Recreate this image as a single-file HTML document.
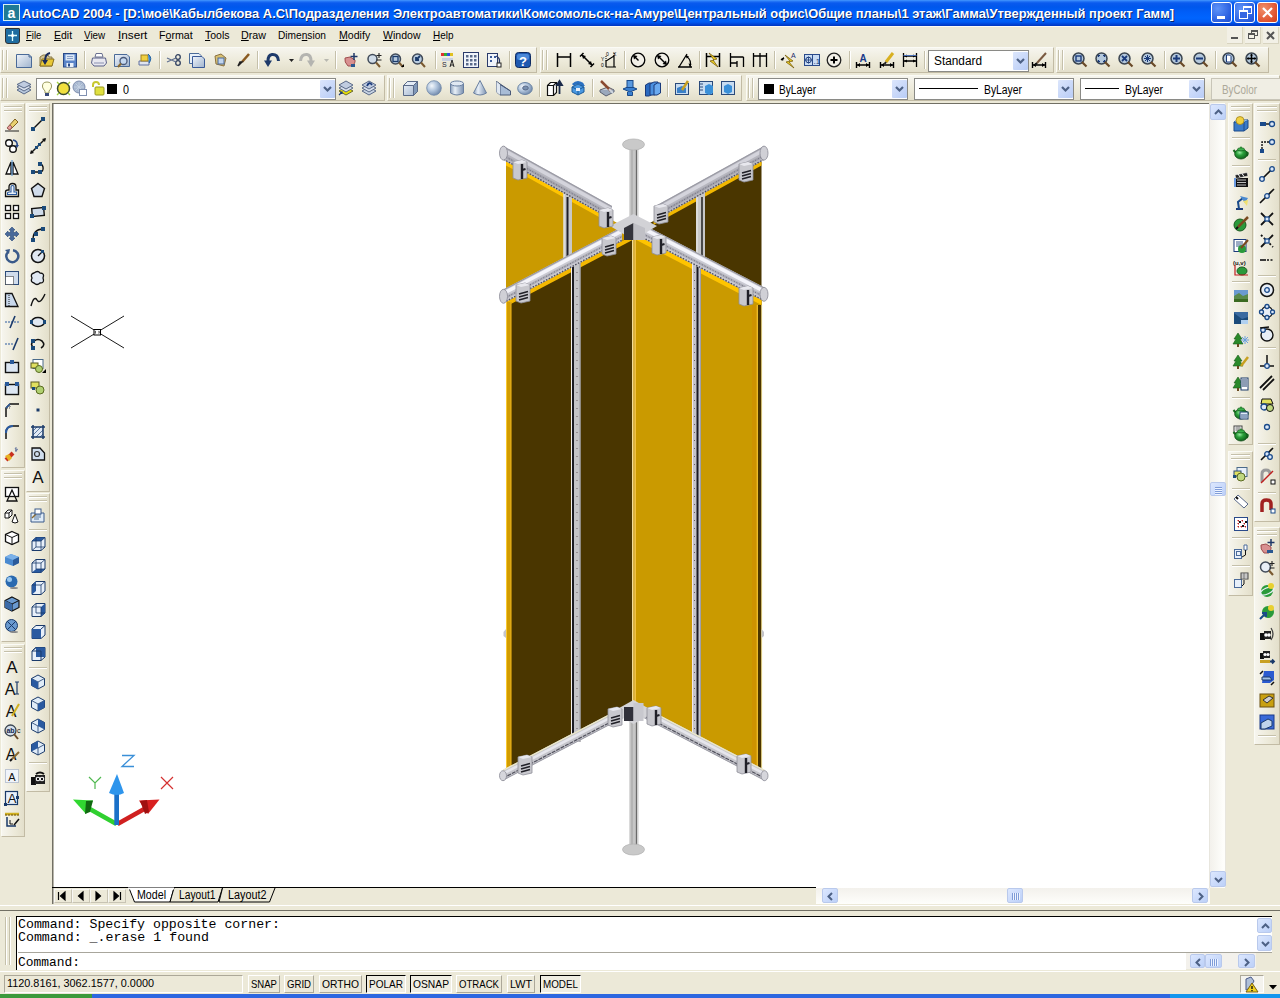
<!DOCTYPE html>
<html><head><meta charset="utf-8">
<style>
*{margin:0;padding:0;box-sizing:border-box}
html,body{width:1280px;height:998px;overflow:hidden;background:#ECE9D8;font-family:"Liberation Sans",sans-serif;color:#000}
.a{position:absolute}
.t{white-space:nowrap}
svg{overflow:visible}
</style></head><body>
<div class="a " style="left:0px;top:0px;width:1280px;height:26px;background:linear-gradient(#4A9CFF 0px,#2A7CF8 1px,#0A5AEE 3px,#0057EC 7px,#005EF8 12px,#0064FE 18px,#005CF4 22px,#0046DA 24px,#0036C0 26px)"></div>
<div class="a " style="left:3px;top:4px;width:17px;height:17px;background:#1F7A95;border:1px solid #D8F0F0;"><svg width="15" height="15" style="position:absolute;left:0;top:0"><text x="7.5" y="12.5" font-size="14" font-family="Liberation Sans" font-weight="bold" fill="#fff" text-anchor="middle">a</text></svg></div>
<div id="t1" class="a t" style="left:22px;top:6px;font-size:13px;line-height:15px;font-family:'Liberation Sans',sans-serif;font-weight:bold;color:#fff;transform:scaleX(0.9933);transform-origin:0 0;text-shadow:1px 1px 0 #0A246A;">AutoCAD 2004 - [D:\моё\Кабылбекова А.С\Подразделения Электроавтоматики\Комсомольск-на-Амуре\Центральный офис\Общие планы\1 этаж\Гамма\Утвержденный проект Гамм]</div>
<div class="a " style="left:1211px;top:2px;width:21px;height:21px;border:1px solid #fff;border-radius:3px;background:radial-gradient(circle at 30% 30%,#5E93F8,#2A5FE0 70%,#1F4FCC);"><div class="a" style="left:5px;top:13px;width:8px;height:3px;background:#fff"></div></div>
<div class="a " style="left:1234px;top:2px;width:21px;height:21px;border:1px solid #fff;border-radius:3px;background:radial-gradient(circle at 30% 30%,#5E93F8,#2A5FE0 70%,#1F4FCC);"><div class="a" style="left:8px;top:3px;width:9px;height:8px;border:1px solid #fff;border-top-width:2px"></div><div class="a" style="left:4px;top:7px;width:9px;height:9px;border:1px solid #fff;border-top-width:2px;background:#3466E2"></div></div>
<div class="a " style="left:1257px;top:2px;width:21px;height:21px;border:1px solid #fff;border-radius:3px;background:radial-gradient(circle at 30% 30%,#F0906A,#E0532F 70%,#C8401E);"><svg class="a" style="left:0;top:0" width="19" height="19"><path d="M5 5L14 14M14 5L5 14" stroke="#fff" stroke-width="2.2"/></svg></div>
<div class="a " style="left:0px;top:26px;width:1280px;height:20px;background:#ECE9D8;border-top:1px solid #FCFAF4"></div>
<div id="t2" class="a t" style="left:25.6px;top:29px;font-size:11px;line-height:13px;font-family:'Liberation Sans',sans-serif;color:#000;transform:scaleX(0.8676);transform-origin:0 0;"><u>F</u>ile</div>
<div id="t3" class="a t" style="left:53.8px;top:29px;font-size:11px;line-height:13px;font-family:'Liberation Sans',sans-serif;color:#000;transform:scaleX(0.9542);transform-origin:0 0;"><u>E</u>dit</div>
<div id="t4" class="a t" style="left:83.8px;top:29px;font-size:11px;line-height:13px;font-family:'Liberation Sans',sans-serif;color:#000;transform:scaleX(0.8962);transform-origin:0 0;"><u>V</u>iew</div>
<div id="t5" class="a t" style="left:117.5px;top:29px;font-size:11px;line-height:13px;font-family:'Liberation Sans',sans-serif;color:#000;transform:scaleX(1.0679);transform-origin:0 0;"><u>I</u>nsert</div>
<div id="t6" class="a t" style="left:158.8px;top:29px;font-size:11px;line-height:13px;font-family:'Liberation Sans',sans-serif;color:#000;transform:scaleX(0.9667);transform-origin:0 0;">F<u>o</u>rmat</div>
<div id="t7" class="a t" style="left:205px;top:29px;font-size:11px;line-height:13px;font-family:'Liberation Sans',sans-serif;color:#000;transform:scaleX(0.9538);transform-origin:0 0;"><u>T</u>ools</div>
<div id="t8" class="a t" style="left:241px;top:29px;font-size:11px;line-height:13px;font-family:'Liberation Sans',sans-serif;color:#000;transform:scaleX(0.9732);transform-origin:0 0;"><u>D</u>raw</div>
<div id="t9" class="a t" style="left:278px;top:29px;font-size:11px;line-height:13px;font-family:'Liberation Sans',sans-serif;color:#000;transform:scaleX(0.9234);transform-origin:0 0;">Dime<u>n</u>sion</div>
<div id="t10" class="a t" style="left:338.8px;top:29px;font-size:11px;line-height:13px;font-family:'Liberation Sans',sans-serif;color:#000;transform:scaleX(0.9623);transform-origin:0 0;"><u>M</u>odify</div>
<div id="t11" class="a t" style="left:382.5px;top:29px;font-size:11px;line-height:13px;font-family:'Liberation Sans',sans-serif;color:#000;transform:scaleX(0.9581);transform-origin:0 0;"><u>W</u>indow</div>
<div id="t12" class="a t" style="left:432.5px;top:29px;font-size:11px;line-height:13px;font-family:'Liberation Sans',sans-serif;color:#000;transform:scaleX(0.9055);transform-origin:0 0;"><u>H</u>elp</div>
<div class="a " style="left:5px;top:28px;width:15px;height:16px;background:#1E6CA0;border:1px solid #333;border-radius:1px 1px 3px 3px"><svg class="a" style="left:0;top:0" width="13" height="14"><path d="M6.5 2V12M2 6.5H11" stroke="#dff" stroke-width="1.3"/><circle cx="6.5" cy="6.5" r="1.5" fill="#fff"/></svg></div>
<div class="a " style="left:1227px;top:27px;width:16px;height:17px;background:#F2F0E6;border-right:1px solid #D8D4C0;border-bottom:1px solid #D8D4C0"><div class="a" style="left:4px;top:10px;width:7px;height:2px;background:#555"></div></div>
<div class="a " style="left:1245px;top:27px;width:16px;height:17px;background:#F2F0E6;border-right:1px solid #D8D4C0;border-bottom:1px solid #D8D4C0"><div class="a" style="left:6px;top:3px;width:7px;height:6px;border:1px solid #555;border-top-width:2px"></div><div class="a" style="left:3px;top:6px;width:7px;height:6px;border:1px solid #555;border-top-width:2px;background:#F2F0E6"></div></div>
<div class="a " style="left:1263px;top:27px;width:16px;height:17px;background:#F2F0E6;border-right:1px solid #D8D4C0;border-bottom:1px solid #D8D4C0"><svg class="a" style="left:0;top:0" width="16" height="17"><path d="M4 5L11 12M11 5L4 12" stroke="#555" stroke-width="2"/></svg></div>
<div class="a " style="left:0px;top:46px;width:1280px;height:57px;background:#ECE9D8"></div>
<div class="a " style="left:0px;top:47px;width:537px;height:26px;background:linear-gradient(#F6F5EE,#ECE9D8 60%,#E3DFCB);border-right:1px solid #C2BBA4;border-bottom:1px solid #C2BBA4;border-top:1px solid #FBFBF6;border-left:1px solid #FBFBF6"></div>
<div class="a " style="left:2px;top:50px;width:2px;height:20px;border-left:1px solid #C5C0AA;border-right:1px solid #fff"></div>
<div class="a " style="left:6px;top:50px;width:2px;height:20px;border-left:1px solid #C5C0AA;border-right:1px solid #fff"></div>
<div class="a " style="left:540px;top:47px;width:514px;height:26px;background:linear-gradient(#F6F5EE,#ECE9D8 60%,#E3DFCB);border-right:1px solid #C2BBA4;border-bottom:1px solid #C2BBA4;border-top:1px solid #FBFBF6;border-left:1px solid #FBFBF6"></div>
<div class="a " style="left:542px;top:50px;width:2px;height:20px;border-left:1px solid #C5C0AA;border-right:1px solid #fff"></div>
<div class="a " style="left:546px;top:50px;width:2px;height:20px;border-left:1px solid #C5C0AA;border-right:1px solid #fff"></div>
<div class="a " style="left:1056px;top:47px;width:213px;height:26px;background:linear-gradient(#F6F5EE,#ECE9D8 60%,#E3DFCB);border-right:1px solid #C2BBA4;border-bottom:1px solid #C2BBA4;border-top:1px solid #FBFBF6;border-left:1px solid #FBFBF6"></div>
<div class="a " style="left:1058px;top:50px;width:2px;height:20px;border-left:1px solid #C5C0AA;border-right:1px solid #fff"></div>
<div class="a " style="left:1062px;top:50px;width:2px;height:20px;border-left:1px solid #C5C0AA;border-right:1px solid #fff"></div>
<div class="a " style="left:0px;top:75px;width:385px;height:26px;background:linear-gradient(#F6F5EE,#ECE9D8 60%,#E3DFCB);border-right:1px solid #C2BBA4;border-bottom:1px solid #C2BBA4;border-top:1px solid #FBFBF6;border-left:1px solid #FBFBF6"></div>
<div class="a " style="left:2px;top:78px;width:2px;height:20px;border-left:1px solid #C5C0AA;border-right:1px solid #fff"></div>
<div class="a " style="left:6px;top:78px;width:2px;height:20px;border-left:1px solid #C5C0AA;border-right:1px solid #fff"></div>
<div class="a " style="left:387px;top:75px;width:355px;height:26px;background:linear-gradient(#F6F5EE,#ECE9D8 60%,#E3DFCB);border-right:1px solid #C2BBA4;border-bottom:1px solid #C2BBA4;border-top:1px solid #FBFBF6;border-left:1px solid #FBFBF6"></div>
<div class="a " style="left:389px;top:78px;width:2px;height:20px;border-left:1px solid #C5C0AA;border-right:1px solid #fff"></div>
<div class="a " style="left:393px;top:78px;width:2px;height:20px;border-left:1px solid #C5C0AA;border-right:1px solid #fff"></div>
<div class="a " style="left:746px;top:75px;width:534px;height:26px;background:linear-gradient(#F6F5EE,#ECE9D8 60%,#E3DFCB);border-right:1px solid #C2BBA4;border-bottom:1px solid #C2BBA4;border-top:1px solid #FBFBF6;border-left:1px solid #FBFBF6"></div>
<div class="a " style="left:748px;top:78px;width:2px;height:20px;border-left:1px solid #C5C0AA;border-right:1px solid #fff"></div>
<div class="a " style="left:752px;top:78px;width:2px;height:20px;border-left:1px solid #C5C0AA;border-right:1px solid #fff"></div>
<div class="a " style="left:84px;top:51px;width:2px;height:18px;border-left:1px solid #C5C0AA;border-right:1px solid #fff"></div>
<div class="a " style="left:159px;top:51px;width:2px;height:18px;border-left:1px solid #C5C0AA;border-right:1px solid #fff"></div>
<div class="a " style="left:257px;top:51px;width:2px;height:18px;border-left:1px solid #C5C0AA;border-right:1px solid #fff"></div>
<div class="a " style="left:335px;top:51px;width:2px;height:18px;border-left:1px solid #C5C0AA;border-right:1px solid #fff"></div>
<div class="a " style="left:435px;top:51px;width:2px;height:18px;border-left:1px solid #C5C0AA;border-right:1px solid #fff"></div>
<div class="a " style="left:509px;top:51px;width:2px;height:18px;border-left:1px solid #C5C0AA;border-right:1px solid #fff"></div>
<div class="a " style="left:624px;top:51px;width:2px;height:18px;border-left:1px solid #C5C0AA;border-right:1px solid #fff"></div>
<div class="a " style="left:699px;top:51px;width:2px;height:18px;border-left:1px solid #C5C0AA;border-right:1px solid #fff"></div>
<div class="a " style="left:774px;top:51px;width:2px;height:18px;border-left:1px solid #C5C0AA;border-right:1px solid #fff"></div>
<div class="a " style="left:849px;top:51px;width:2px;height:18px;border-left:1px solid #C5C0AA;border-right:1px solid #fff"></div>
<div class="a " style="left:924px;top:51px;width:2px;height:18px;border-left:1px solid #C5C0AA;border-right:1px solid #fff"></div>
<div class="a " style="left:1164px;top:51px;width:2px;height:18px;border-left:1px solid #C5C0AA;border-right:1px solid #fff"></div>
<div class="a " style="left:1215px;top:51px;width:2px;height:18px;border-left:1px solid #C5C0AA;border-right:1px solid #fff"></div>
<div class="a " style="left:539px;top:79px;width:2px;height:18px;border-left:1px solid #C5C0AA;border-right:1px solid #fff"></div>
<div class="a " style="left:592px;top:79px;width:2px;height:18px;border-left:1px solid #C5C0AA;border-right:1px solid #fff"></div>
<div class="a " style="left:667px;top:79px;width:2px;height:18px;border-left:1px solid #C5C0AA;border-right:1px solid #fff"></div>
<div class="a " style="left:0px;top:103px;width:52px;height:800px;background:#ECE9D8"></div>
<div class="a " style="left:1px;top:103px;width:24px;height:365px;background:linear-gradient(90deg,#F6F5EE,#ECE9D8 60%,#E3DFCB);border-right:1px solid #C2BBA4;border-bottom:1px solid #C2BBA4;border-top:1px solid #FBFBF6;border-left:1px solid #FBFBF6"></div>
<div class="a " style="left:4px;top:106px;width:18px;height:2px;border-top:1px solid #C5C0AA;border-bottom:1px solid #fff"></div>
<div class="a " style="left:4px;top:110px;width:18px;height:2px;border-top:1px solid #C5C0AA;border-bottom:1px solid #fff"></div>
<div class="a " style="left:26px;top:103px;width:24px;height:389px;background:linear-gradient(90deg,#F6F5EE,#ECE9D8 60%,#E3DFCB);border-right:1px solid #C2BBA4;border-bottom:1px solid #C2BBA4;border-top:1px solid #FBFBF6;border-left:1px solid #FBFBF6"></div>
<div class="a " style="left:29px;top:106px;width:18px;height:2px;border-top:1px solid #C5C0AA;border-bottom:1px solid #fff"></div>
<div class="a " style="left:29px;top:110px;width:18px;height:2px;border-top:1px solid #C5C0AA;border-bottom:1px solid #fff"></div>
<div class="a " style="left:1px;top:470px;width:24px;height:172px;background:linear-gradient(90deg,#F6F5EE,#ECE9D8 60%,#E3DFCB);border-right:1px solid #C2BBA4;border-bottom:1px solid #C2BBA4;border-top:1px solid #FBFBF6;border-left:1px solid #FBFBF6"></div>
<div class="a " style="left:4px;top:473px;width:18px;height:2px;border-top:1px solid #C5C0AA;border-bottom:1px solid #fff"></div>
<div class="a " style="left:4px;top:477px;width:18px;height:2px;border-top:1px solid #C5C0AA;border-bottom:1px solid #fff"></div>
<div class="a " style="left:26px;top:493px;width:24px;height:299px;background:linear-gradient(90deg,#F6F5EE,#ECE9D8 60%,#E3DFCB);border-right:1px solid #C2BBA4;border-bottom:1px solid #C2BBA4;border-top:1px solid #FBFBF6;border-left:1px solid #FBFBF6"></div>
<div class="a " style="left:29px;top:496px;width:18px;height:2px;border-top:1px solid #C5C0AA;border-bottom:1px solid #fff"></div>
<div class="a " style="left:29px;top:500px;width:18px;height:2px;border-top:1px solid #C5C0AA;border-bottom:1px solid #fff"></div>
<div class="a " style="left:1px;top:644px;width:24px;height:193px;background:linear-gradient(90deg,#F6F5EE,#ECE9D8 60%,#E3DFCB);border-right:1px solid #C2BBA4;border-bottom:1px solid #C2BBA4;border-top:1px solid #FBFBF6;border-left:1px solid #FBFBF6"></div>
<div class="a " style="left:4px;top:647px;width:18px;height:2px;border-top:1px solid #C5C0AA;border-bottom:1px solid #fff"></div>
<div class="a " style="left:4px;top:651px;width:18px;height:2px;border-top:1px solid #C5C0AA;border-bottom:1px solid #fff"></div>
<div class="a " style="left:52px;top:103px;width:1158px;height:785px;background:#fff;border-left:1px solid #716F64;border-top:1px solid #716F64;box-shadow:inset 1px 0 0 #B8B6AC"></div>
<div class="a " style="left:52px;top:887px;width:764px;height:1px;background:#000"></div>
<div class="a " style="left:1209px;top:103px;width:19px;height:785px;background:linear-gradient(90deg,#E8E6DE 0,#E8E6DE 1px,#F3F1EC 1px,#F6F5F0 5px,#FEFEFB 14px,#FEFEFB 16px,#E8E6DE 16px,#E8E6DE 17px,#FAFAF2 17px)"></div>
<div class="a " style="left:1210px;top:104px;width:16px;height:16px;background:linear-gradient(135deg,#DCE7FE,#BCD0F8);border:1px solid #B9C9EC;border-radius:2px"><svg class="a" style="left:0;top:0" width="16" height="16"><path d="M4 9L7.5 5.5L11 9" stroke="#4D6185" stroke-width="2" fill="none"/></svg></div>
<div class="a " style="left:1210px;top:871px;width:16px;height:16px;background:linear-gradient(135deg,#DCE7FE,#BCD0F8);border:1px solid #B9C9EC;border-radius:2px"><svg class="a" style="left:0;top:0" width="16" height="16"><path d="M4 6L7.5 9.5L11 6" stroke="#4D6185" stroke-width="2" fill="none"/></svg></div>
<div class="a " style="left:1210px;top:482px;width:16px;height:14px;background:linear-gradient(135deg,#DCE7FE,#BCD0F8);border:1px solid #B9C9EC;border-radius:2px"><svg class="a" style="left:0;top:0" width="16" height="14"><path d="M4 4.5H11M4 6.5H11M4 8.5H11M4 10.5H11" stroke="#7F9CD8" stroke-width="1"/><path d="M4 5.5H11M4 7.5H11M4 9.5H11M4 11.5H11" stroke="#EEF4FF" stroke-width="1"/></svg></div>
<div class="a " style="left:1226px;top:103px;width:54px;height:800px;background:#ECE9D8"></div>
<div class="a " style="left:1228px;top:103px;width:25px;height:342px;background:linear-gradient(90deg,#F6F5EE,#ECE9D8 60%,#E3DFCB);border-right:1px solid #C2BBA4;border-bottom:1px solid #C2BBA4;border-top:1px solid #FBFBF6;border-left:1px solid #FBFBF6"></div>
<div class="a " style="left:1231px;top:106px;width:19px;height:2px;border-top:1px solid #C5C0AA;border-bottom:1px solid #fff"></div>
<div class="a " style="left:1231px;top:110px;width:19px;height:2px;border-top:1px solid #C5C0AA;border-bottom:1px solid #fff"></div>
<div class="a " style="left:1228px;top:451px;width:25px;height:145px;background:linear-gradient(90deg,#F6F5EE,#ECE9D8 60%,#E3DFCB);border-right:1px solid #C2BBA4;border-bottom:1px solid #C2BBA4;border-top:1px solid #FBFBF6;border-left:1px solid #FBFBF6"></div>
<div class="a " style="left:1231px;top:454px;width:19px;height:2px;border-top:1px solid #C5C0AA;border-bottom:1px solid #fff"></div>
<div class="a " style="left:1231px;top:458px;width:19px;height:2px;border-top:1px solid #C5C0AA;border-bottom:1px solid #fff"></div>
<div class="a " style="left:1254px;top:103px;width:26px;height:419px;background:linear-gradient(90deg,#F6F5EE,#ECE9D8 60%,#E3DFCB);border-right:1px solid #C2BBA4;border-bottom:1px solid #C2BBA4;border-top:1px solid #FBFBF6;border-left:1px solid #FBFBF6"></div>
<div class="a " style="left:1257px;top:106px;width:20px;height:2px;border-top:1px solid #C5C0AA;border-bottom:1px solid #fff"></div>
<div class="a " style="left:1257px;top:110px;width:20px;height:2px;border-top:1px solid #C5C0AA;border-bottom:1px solid #fff"></div>
<div class="a " style="left:1254px;top:527px;width:26px;height:218px;background:linear-gradient(90deg,#F6F5EE,#ECE9D8 60%,#E3DFCB);border-right:1px solid #C2BBA4;border-bottom:1px solid #C2BBA4;border-top:1px solid #FBFBF6;border-left:1px solid #FBFBF6"></div>
<div class="a " style="left:1257px;top:530px;width:20px;height:2px;border-top:1px solid #C5C0AA;border-bottom:1px solid #fff"></div>
<div class="a " style="left:1257px;top:534px;width:20px;height:2px;border-top:1px solid #C5C0AA;border-bottom:1px solid #fff"></div>
<div class="a " style="left:52px;top:888px;width:764px;height:16px;background:#ECE9D8;border-left:1px solid #716F64;box-shadow:inset 1px 0 0 #B8B6AC"></div>
<div class="a " style="left:816px;top:888px;width:394px;height:16px;background:linear-gradient(#F3F1EC,#FEFEFB)"></div>
<div class="a " style="left:822px;top:888px;width:16px;height:15px;background:linear-gradient(135deg,#DCE7FE,#BCD0F8);border:1px solid #B9C9EC;border-radius:2px"><svg class="a" style="left:0;top:0" width="16" height="15"><path d="M9 4L5.5 7.5L9 11" stroke="#4D6185" stroke-width="2" fill="none"/></svg></div>
<div class="a " style="left:1007px;top:888px;width:16px;height:15px;background:linear-gradient(135deg,#DCE7FE,#BCD0F8);border:1px solid #B9C9EC;border-radius:2px"><svg class="a" style="left:0;top:0" width="16" height="15"><path d="M4.5 4V11M6.5 4V11M8.5 4V11M10.5 4V11" stroke="#7F9CD8" stroke-width="1"/><path d="M5.5 4V11M7.5 4V11M9.5 4V11M11.5 4V11" stroke="#EEF4FF" stroke-width="1"/></svg></div>
<div class="a " style="left:1192px;top:888px;width:16px;height:15px;background:linear-gradient(135deg,#DCE7FE,#BCD0F8);border:1px solid #B9C9EC;border-radius:2px"><svg class="a" style="left:0;top:0" width="16" height="15"><path d="M6 4L9.5 7.5L6 11" stroke="#4D6185" stroke-width="2" fill="none"/></svg></div>
<div class="a " style="left:54px;top:889px;width:18px;height:14px;background:#ECE9D8;border:1px solid #C8C4B4;border-top-color:#F8F8F4;border-left-color:#F8F8F4"></div>
<div class="a " style="left:72px;top:889px;width:18px;height:14px;background:#ECE9D8;border:1px solid #C8C4B4;border-top-color:#F8F8F4;border-left-color:#F8F8F4"></div>
<div class="a " style="left:90px;top:889px;width:18px;height:14px;background:#ECE9D8;border:1px solid #C8C4B4;border-top-color:#F8F8F4;border-left-color:#F8F8F4"></div>
<div class="a " style="left:108px;top:889px;width:18px;height:14px;background:#ECE9D8;border:1px solid #C8C4B4;border-top-color:#F8F8F4;border-left-color:#F8F8F4"></div>
<svg class="a" style="left:54px;top:889px" width="72" height="15"><path d="M4.5 3V11M11 3L6.5 7L11 11Z M29 3L24.5 7L29 11Z M42 3L46.5 7L42 11Z M60 3L64.5 7L60 11Z M66.5 3V11" stroke="#000" fill="#000" stroke-width="1.2"/></svg>
<svg class="a" style="left:126px;top:888px" width="150" height="17"><path d="M3 0L8.5 14H44L48 0" fill="#fff" stroke="#000" stroke-width="1"/><path d="M48 0L44 14H92L96.5 0" fill="#ECE9D8" stroke="#000" stroke-width="1"/><path d="M96.5 0L93 14H143.5L149 0" fill="#ECE9D8" stroke="#000" stroke-width="1"/><path d="M2 0.5H48" stroke="#fff" stroke-width="2"/></svg>
<div id="t13" class="a t" style="left:137px;top:888px;font-size:12px;line-height:14px;font-family:'Liberation Sans',sans-serif;color:#000;transform:scaleX(0.8872);transform-origin:0 0;">Model</div>
<div id="t14" class="a t" style="left:178.5px;top:888px;font-size:12px;line-height:14px;font-family:'Liberation Sans',sans-serif;color:#000;transform:scaleX(0.8547);transform-origin:0 0;">Layout1</div>
<div id="t15" class="a t" style="left:228px;top:888px;font-size:12px;line-height:14px;font-family:'Liberation Sans',sans-serif;color:#000;transform:scaleX(0.9016);transform-origin:0 0;">Layout2</div>
<div class="a " style="left:0px;top:905px;width:1280px;height:1px;background:#fff"></div>
<div class="a " style="left:0px;top:910px;width:1280px;height:1px;background:#716F64"></div>
<div class="a " style="left:0px;top:911px;width:1280px;height:61px;background:#ECE9D8"></div>
<div class="a " style="left:5px;top:917px;width:2px;height:48px;border-left:1px solid #C5C0AA;border-right:1px solid #fff"></div>
<div class="a " style="left:9px;top:917px;width:2px;height:48px;border-left:1px solid #C5C0AA;border-right:1px solid #fff"></div>
<div class="a " style="left:16px;top:916px;width:1256px;height:54px;background:#fff;border-top:1px solid #000;border-left:1px solid #000"></div>
<div class="a " style="left:18px;top:952px;width:1254px;height:1px;background:#A8A69C"></div>
<div id="t16" class="a t" style="left:18px;top:917px;font-size:13px;line-height:15px;font-family:'Liberation Mono',monospace;color:#000;transform:scaleX(1.0177);transform-origin:0 0;">Command:&nbsp;Specify opposite corner:</div>
<div id="t17" class="a t" style="left:18px;top:930px;font-size:13px;line-height:15px;font-family:'Liberation Mono',monospace;color:#000;transform:scaleX(1.0201);transform-origin:0 0;">Command:&nbsp;_.erase 1 found</div>
<div id="t18" class="a t" style="left:18px;top:955px;font-size:13px;line-height:15px;font-family:'Liberation Mono',monospace;color:#000;transform:scaleX(0.9932);transform-origin:0 0;">Command:</div>
<div class="a " style="left:1257px;top:918px;width:15px;height:15px;background:linear-gradient(135deg,#DCE7FE,#BCD0F8);border:1px solid #B9C9EC;border-radius:2px"><svg class="a" style="left:0;top:0" width="15" height="15"><path d="M4 9L7.5 5.5L11 9" stroke="#4D6185" stroke-width="2" fill="none"/></svg></div>
<div class="a " style="left:1257px;top:935px;width:15px;height:16px;background:linear-gradient(135deg,#DCE7FE,#BCD0F8);border:1px solid #B9C9EC;border-radius:2px"><svg class="a" style="left:0;top:0" width="15" height="16"><path d="M4 6L7.5 9.5L11 6" stroke="#4D6185" stroke-width="2" fill="none"/></svg></div>
<div class="a " style="left:1186px;top:953px;width:86px;height:17px;background:#ECE9D8"></div>
<div class="a " style="left:1186px;top:953px;width:70px;height:16px;background:#F3F1EC"></div>
<div class="a " style="left:1190px;top:954px;width:15px;height:14px;background:linear-gradient(135deg,#DCE7FE,#BCD0F8);border:1px solid #B9C9EC;border-radius:2px"><svg class="a" style="left:0;top:0" width="15" height="14"><path d="M9 4L5.5 7.5L9 11" stroke="#4D6185" stroke-width="2" fill="none"/></svg></div>
<div class="a " style="left:1205px;top:954px;width:17px;height:14px;background:linear-gradient(135deg,#DCE7FE,#BCD0F8);border:1px solid #B9C9EC;border-radius:2px"><svg class="a" style="left:0;top:0" width="17" height="14"><path d="M4.5 4V11M6.5 4V11M8.5 4V11M10.5 4V11" stroke="#7F9CD8" stroke-width="1"/><path d="M5.5 4V11M7.5 4V11M9.5 4V11M11.5 4V11" stroke="#EEF4FF" stroke-width="1"/></svg></div>
<div class="a " style="left:1238px;top:954px;width:17px;height:14px;background:linear-gradient(135deg,#DCE7FE,#BCD0F8);border:1px solid #B9C9EC;border-radius:2px"><svg class="a" style="left:0;top:0" width="17" height="14"><path d="M6 4L9.5 7.5L6 11" stroke="#4D6185" stroke-width="2" fill="none"/></svg></div>
<div class="a " style="left:0px;top:971px;width:1280px;height:23px;background:#ECE9D8;border-top:1px solid #fff"></div>
<div class="a " style="left:4px;top:975px;width:239px;height:18px;border-top:1px solid #ACA899;border-left:1px solid #ACA899;border-right:1px solid #fff;border-bottom:1px solid #fff"></div>
<div id="t19" class="a t" style="left:7px;top:977px;font-size:11px;line-height:13px;font-family:'Liberation Sans',sans-serif;color:#000;transform:scaleX(0.9862);transform-origin:0 0;">1120.8161, 3062.1577, 0.0000</div>
<div class="a " style="left:248px;top:975px;width:32px;height:18px;border-top:1px solid #fff;border-left:1px solid #fff;border-right:1px solid #ACA899;border-bottom:1px solid #ACA899"></div>
<div id="t20" class="a t" style="left:251px;top:978px;font-size:11px;line-height:13px;font-family:'Liberation Sans',sans-serif;color:#000;transform:scaleX(0.8676);transform-origin:0 0;">SNAP</div>
<div class="a " style="left:284px;top:975px;width:30px;height:18px;border-top:1px solid #fff;border-left:1px solid #fff;border-right:1px solid #ACA899;border-bottom:1px solid #ACA899"></div>
<div id="t21" class="a t" style="left:287px;top:978px;font-size:11px;line-height:13px;font-family:'Liberation Sans',sans-serif;color:#000;transform:scaleX(0.8727);transform-origin:0 0;">GRID</div>
<div class="a " style="left:319px;top:975px;width:43px;height:18px;border-top:1px solid #fff;border-left:1px solid #fff;border-right:1px solid #ACA899;border-bottom:1px solid #ACA899"></div>
<div id="t22" class="a t" style="left:322px;top:978px;font-size:11px;line-height:13px;font-family:'Liberation Sans',sans-serif;color:#000;transform:scaleX(0.9360);transform-origin:0 0;">ORTHO</div>
<div class="a " style="left:366px;top:975px;width:40px;height:18px;border-top:1px solid #000;border-left:1px solid #000;border-right:1px solid #fff;border-bottom:1px solid #fff;background:#EFEDE2"></div>
<div id="t23" class="a t" style="left:369px;top:978px;font-size:11px;line-height:13px;font-family:'Liberation Sans',sans-serif;color:#000;transform:scaleX(0.9116);transform-origin:0 0;">POLAR</div>
<div class="a " style="left:410px;top:975px;width:42px;height:18px;border-top:1px solid #000;border-left:1px solid #000;border-right:1px solid #fff;border-bottom:1px solid #fff;background:#EFEDE2"></div>
<div id="t24" class="a t" style="left:413px;top:978px;font-size:11px;line-height:13px;font-family:'Liberation Sans',sans-serif;color:#000;transform:scaleX(0.9347);transform-origin:0 0;">OSNAP</div>
<div class="a " style="left:456px;top:975px;width:46px;height:18px;border-top:1px solid #fff;border-left:1px solid #fff;border-right:1px solid #ACA899;border-bottom:1px solid #ACA899"></div>
<div id="t25" class="a t" style="left:459px;top:978px;font-size:11px;line-height:13px;font-family:'Liberation Sans',sans-serif;color:#000;transform:scaleX(0.8725);transform-origin:0 0;">OTRACK</div>
<div class="a " style="left:507px;top:975px;width:28px;height:18px;border-top:1px solid #fff;border-left:1px solid #fff;border-right:1px solid #ACA899;border-bottom:1px solid #ACA899"></div>
<div id="t26" class="a t" style="left:510px;top:978px;font-size:11px;line-height:13px;font-family:'Liberation Sans',sans-serif;color:#000;transform:scaleX(0.9819);transform-origin:0 0;">LWT</div>
<div class="a " style="left:540px;top:975px;width:41px;height:18px;border-top:1px solid #000;border-left:1px solid #000;border-right:1px solid #fff;border-bottom:1px solid #fff;background:#EFEDE2"></div>
<div id="t27" class="a t" style="left:543px;top:978px;font-size:11px;line-height:13px;font-family:'Liberation Sans',sans-serif;color:#000;transform:scaleX(0.8946);transform-origin:0 0;">MODEL</div>
<div class="a " style="left:0px;top:994px;width:1280px;height:4px;background:#2D67E0"></div>
<div class="a " style="left:0px;top:994px;width:92px;height:4px;background:#3C9A3C"></div>
<div class="a " style="left:1170px;top:994px;width:110px;height:4px;background:#1296EE"></div>
<svg class="a" style="left:0;top:0" width="1280" height="998"><rect x="629" y="146" width="9.5" height="704" fill="#C6C6C6"/><line x1="629.5" y1="150.0" x2="629.5" y2="845.0" stroke="#DADADA" stroke-width="1" /><line x1="632.0" y1="150.0" x2="632.0" y2="845.0" stroke="#9A9A9A" stroke-width="0.8" /><line x1="636.5" y1="150.0" x2="636.5" y2="845.0" stroke="#6A6A6A" stroke-width="1.3" /><line x1="638.0" y1="150.0" x2="638.0" y2="845.0" stroke="#E8E8E8" stroke-width="1" /><ellipse cx="633.5" cy="144.5" rx="11" ry="5.5" fill="#C9C9C9" stroke="#B4B4B4" stroke-width="0.8"/><ellipse cx="633.5" cy="849.5" rx="11" ry="5.5" fill="#C9C9C9" stroke="#B4B4B4" stroke-width="0.8"/><polygon points="506.0,161.5 633.5,232.0 633.5,702.5 506.0,630.7" fill="#CA9A00" /><polygon points="761.5,161.5 633.5,232.0 633.5,702.5 761.5,630.7" fill="#4A3600" /><polygon points="506.0,161.5 613.5,220.9 613.5,224.9 506.0,165.5" fill="#FFC400" /><polygon points="761.5,161.5 653.5,221.0 653.5,225.0 761.5,165.5" fill="#F2B800" /><rect x="563.5" y="190" width="8.5" height="80" fill="#C8C8C8"/><line x1="564.0" y1="190.0" x2="564.0" y2="270.0" stroke="#EEE" stroke-width="1" /><line x1="567.5" y1="197.0" x2="567.5" y2="270.0" stroke="#1E1E28" stroke-width="2" /><rect x="696" y="190" width="9" height="80" fill="#C8C8C8"/><line x1="697.0" y1="190.0" x2="697.0" y2="270.0" stroke="#EEE" stroke-width="1" /><line x1="702.0" y1="197.0" x2="702.0" y2="270.0" stroke="#2A2A2A" stroke-width="1.6" /><polygon points="503.5,146.1 612.0,206.1 612.0,220.1 503.5,160.1" fill="#B6B6BE" /><polygon points="503.5,146.1 612.0,206.1 612.0,207.3 503.5,147.3" fill="#9A9AA4" /><polygon points="503.5,148.1 612.0,208.1 612.0,212.1 503.5,152.1" fill="#D4D4DC" /><polygon points="503.5,154.1 612.0,214.1 612.0,217.1 503.5,157.1" fill="#A4A4AE" /><line x1="503.5" y1="155.6" x2="612.0" y2="215.6" stroke="#6A6A78" stroke-width="1" stroke-dasharray="1 2"/><line x1="503.5" y1="159.3" x2="612.0" y2="219.3" stroke="#4A4A58" stroke-width="1.3" stroke-dasharray="1.5 1.5"/><ellipse cx="503.5" cy="153.1" rx="4" ry="7.0" fill="#D0D0D6" stroke="#8A8A96" stroke-width="0.8"/><polygon points="764.0,146.1 655.0,206.2 655.0,220.2 764.0,160.1" fill="#B6B6BE" /><polygon points="764.0,146.1 655.0,206.2 655.0,207.4 764.0,147.3" fill="#9A9AA4" /><polygon points="764.0,148.1 655.0,208.2 655.0,212.2 764.0,152.1" fill="#D4D4DC" /><polygon points="764.0,154.1 655.0,214.2 655.0,217.2 764.0,157.1" fill="#A4A4AE" /><line x1="764.0" y1="155.6" x2="655.0" y2="215.7" stroke="#6A6A78" stroke-width="1" stroke-dasharray="1 2"/><line x1="764.0" y1="159.3" x2="655.0" y2="219.4" stroke="#4A4A58" stroke-width="1.3" stroke-dasharray="1.5 1.5"/><ellipse cx="764.0" cy="153.1" rx="4" ry="7.0" fill="#D0D0D6" stroke="#8A8A96" stroke-width="0.8"/><polygon points="506.0,302.0 633.5,235.0 633.5,702.5 506.0,770.7" fill="#4A3600" /><polygon points="761.5,300.0 633.5,233.5 633.5,702.5 761.5,770.7" fill="#CA9A00" /><polygon points="506.0,302.0 633.5,235.0 633.5,239.5 506.0,306.5" fill="#F4B800" /><polygon points="761.5,300.0 633.5,233.5 633.5,238.5 761.5,305.0" fill="#FFC400" /><rect x="506.0" y="302.0" width="5.5" height="468.7" fill="#D29C00"/><line x1="506.5" y1="302.0" x2="506.5" y2="770.7" stroke="#F8C830" stroke-width="1" /><line x1="510.8" y1="302.0" x2="510.8" y2="770.7" stroke="#E8B428" stroke-width="0.8" /><rect x="752" y="305.0" width="5.5" height="465.7" fill="#CE9200"/><rect x="758" y="305.0" width="3.5" height="465.7" fill="#4A3400"/><line x1="757.3" y1="305.0" x2="757.3" y2="770.7" stroke="#F0C030" stroke-width="1.2" /><line x1="761.7" y1="305.0" x2="761.7" y2="770.7" stroke="#F8E8A0" stroke-width="0.8" /><rect x="632" y="238" width="4" height="464.5" fill="#D8B040"/><line x1="632.5" y1="238.0" x2="632.5" y2="702.5" stroke="#F2DC98" stroke-width="1" /><line x1="635.5" y1="238.0" x2="635.5" y2="702.5" stroke="#F0C040" stroke-width="1" /><rect x="571" y="262" width="9.5" height="480" fill="#C4C4C8"/><line x1="571.5" y1="262.0" x2="571.5" y2="742.0" stroke="#F4F0EE" stroke-width="1" /><line x1="573.0" y1="262.0" x2="573.0" y2="742.0" stroke="#1A1A22" stroke-width="2" /><line x1="580.0" y1="262.0" x2="580.0" y2="742.0" stroke="#9A9AA0" stroke-width="1" /><rect x="692" y="262" width="9" height="480" fill="#C4C4C8"/><line x1="692.5" y1="262.0" x2="692.5" y2="742.0" stroke="#F4E8E8" stroke-width="1" /><line x1="697.5" y1="262.0" x2="697.5" y2="742.0" stroke="#1A1A22" stroke-width="2" /><line x1="700.5" y1="262.0" x2="700.5" y2="742.0" stroke="#A0A0A8" stroke-width="1" /><line x1="577" y1="272" x2="577" y2="735" stroke="#6A5A60" stroke-width="1" stroke-dasharray="1 7"/><line x1="694.5" y1="272" x2="694.5" y2="735" stroke="#6A5A60" stroke-width="1" stroke-dasharray="1 7"/><polygon points="503.5,289.3 622.0,227.0 622.0,241.0 503.5,303.3" fill="#CACAD2" /><polygon points="503.5,289.3 622.0,227.0 622.0,228.2 503.5,290.5" fill="#9A9AA4" /><polygon points="503.5,291.3 622.0,229.0 622.0,233.0 503.5,295.3" fill="#F4F4FA" /><polygon points="503.5,297.3 622.0,235.0 622.0,238.0 503.5,300.3" fill="#B0B0BA" /><line x1="503.5" y1="298.8" x2="622.0" y2="236.5" stroke="#6A6A78" stroke-width="1" stroke-dasharray="1 2"/><line x1="503.5" y1="302.5" x2="622.0" y2="240.2" stroke="#4A4A58" stroke-width="1.3" stroke-dasharray="1.5 1.5"/><ellipse cx="503.5" cy="296.3" rx="4" ry="7.0" fill="#D0D0D6" stroke="#8A8A96" stroke-width="0.8"/><polygon points="764.0,287.3 645.0,225.5 645.0,239.5 764.0,301.3" fill="#CACAD2" /><polygon points="764.0,287.3 645.0,225.5 645.0,226.7 764.0,288.5" fill="#9A9AA4" /><polygon points="764.0,289.3 645.0,227.5 645.0,231.5 764.0,293.3" fill="#F4F4FA" /><polygon points="764.0,295.3 645.0,233.5 645.0,236.5 764.0,298.3" fill="#B0B0BA" /><line x1="764.0" y1="296.8" x2="645.0" y2="235.0" stroke="#6A6A78" stroke-width="1" stroke-dasharray="1 2"/><line x1="764.0" y1="300.5" x2="645.0" y2="238.7" stroke="#4A4A58" stroke-width="1.3" stroke-dasharray="1.5 1.5"/><ellipse cx="764.0" cy="294.3" rx="4" ry="7.0" fill="#D0D0D6" stroke="#8A8A96" stroke-width="0.8"/><polygon points="610.0,226.0 633.5,214.0 657.0,226.0 633.5,240.0" fill="#D2D2D6" /><polygon points="624.0,228.0 633.5,223.0 633.5,240.0 624.0,240.0" fill="#34343C" /><polygon points="633.5,223.0 645.0,228.0 645.0,240.0 633.5,240.0" fill="#C0C0C6" /><polygon points="503.0,769.7 624.0,706.6 624.0,717.6 503.0,780.7" fill="#C6C6CC" /><polygon points="503.0,769.7 624.0,706.6 624.0,708.1 503.0,771.2" fill="#ECE8C8" /><polygon points="503.0,772.2 624.0,709.1 624.0,712.1 503.0,775.2" fill="#E6E6EC" /><line x1="503.0" y1="778.2" x2="624.0" y2="715.1" stroke="#50505C" stroke-width="1.2" stroke-dasharray="4 1"/><polygon points="503.0,779.7 624.0,716.6 624.0,717.6 503.0,780.7" fill="#9A9AA4" /><ellipse cx="503.0" cy="775.7" rx="3.5" ry="5" fill="#D6D6DC" stroke="#8A8A96" stroke-width="0.8"/><polygon points="764.5,769.7 643.0,706.6 643.0,717.6 764.5,780.7" fill="#C6C6CC" /><polygon points="764.5,769.7 643.0,706.6 643.0,708.1 764.5,771.2" fill="#ECE8C8" /><polygon points="764.5,772.2 643.0,709.1 643.0,712.1 764.5,775.2" fill="#E6E6EC" /><line x1="764.5" y1="778.2" x2="643.0" y2="715.1" stroke="#50505C" stroke-width="1.2" stroke-dasharray="4 1"/><polygon points="764.5,779.7 643.0,716.6 643.0,717.6 764.5,780.7" fill="#9A9AA4" /><ellipse cx="764.5" cy="775.7" rx="3.5" ry="5" fill="#D6D6DC" stroke="#8A8A96" stroke-width="0.8"/><polygon points="612.0,712.0 633.5,700.0 655.0,712.0 633.5,724.0" fill="#D4D4D8" /><rect x="624" y="707" width="9.5" height="14" fill="#30303A"/><rect x="633.5" y="703" width="10" height="18" fill="#C8C8CE"/><path d="M513 162L522 160L527 162V178L518 180L513 178Z" fill="#C8C8CE" stroke="#8E8E98" stroke-width="0.8"/><path d="M513 162L522 160L527 162L518 164Z" fill="#E8E8EE"/><line x1="522.0" y1="164.0" x2="522.0" y2="179.0" stroke="#202028" stroke-width="2.4" /><line x1="522.0" y1="170.0" x2="525.5" y2="169.0" stroke="#202028" stroke-width="2" /><path d="M599 210L608 208L613 210V226L604 228L599 226Z" fill="#C8C8CE" stroke="#8E8E98" stroke-width="0.8"/><path d="M599 210L608 208L613 210L604 212Z" fill="#E8E8EE"/><line x1="608.0" y1="212.0" x2="608.0" y2="227.0" stroke="#202028" stroke-width="2.4" /><line x1="608.0" y1="218.0" x2="611.5" y2="217.0" stroke="#202028" stroke-width="2" /><path d="M739 164L748 162L753 164V180L744 182L739 180Z" fill="#C8C8CE" stroke="#8E8E98" stroke-width="0.8"/><path d="M739 164L748 162L753 164L744 166Z" fill="#E8E8EE"/><line x1="742.0" y1="173.0" x2="751.0" y2="170.5" stroke="#202028" stroke-width="1.6" /><line x1="742.0" y1="176.0" x2="751.0" y2="173.5" stroke="#202028" stroke-width="1.6" /><line x1="742.0" y1="179.0" x2="751.0" y2="176.5" stroke="#202028" stroke-width="1.6" /><path d="M654 206L663 204L668 206V222L659 224L654 222Z" fill="#C8C8CE" stroke="#8E8E98" stroke-width="0.8"/><path d="M654 206L663 204L668 206L659 208Z" fill="#E8E8EE"/><line x1="657.0" y1="215.0" x2="666.0" y2="212.5" stroke="#202028" stroke-width="1.6" /><line x1="657.0" y1="218.0" x2="666.0" y2="215.5" stroke="#202028" stroke-width="1.6" /><line x1="657.0" y1="221.0" x2="666.0" y2="218.5" stroke="#202028" stroke-width="1.6" /><path d="M516 285L525 283L530 285V301L521 303L516 301Z" fill="#C8C8CE" stroke="#8E8E98" stroke-width="0.8"/><path d="M516 285L525 283L530 285L521 287Z" fill="#E8E8EE"/><line x1="519.0" y1="294.0" x2="528.0" y2="291.5" stroke="#202028" stroke-width="1.6" /><line x1="519.0" y1="297.0" x2="528.0" y2="294.5" stroke="#202028" stroke-width="1.6" /><line x1="519.0" y1="300.0" x2="528.0" y2="297.5" stroke="#202028" stroke-width="1.6" /><path d="M602 238L611 236L616 238V254L607 256L602 254Z" fill="#C8C8CE" stroke="#8E8E98" stroke-width="0.8"/><path d="M602 238L611 236L616 238L607 240Z" fill="#E8E8EE"/><line x1="605.0" y1="247.0" x2="614.0" y2="244.5" stroke="#202028" stroke-width="1.6" /><line x1="605.0" y1="250.0" x2="614.0" y2="247.5" stroke="#202028" stroke-width="1.6" /><line x1="605.0" y1="253.0" x2="614.0" y2="250.5" stroke="#202028" stroke-width="1.6" /><path d="M652 237L661 235L666 237V253L657 255L652 253Z" fill="#C8C8CE" stroke="#8E8E98" stroke-width="0.8"/><path d="M652 237L661 235L666 237L657 239Z" fill="#E8E8EE"/><line x1="661.0" y1="239.0" x2="661.0" y2="254.0" stroke="#202028" stroke-width="2.4" /><line x1="661.0" y1="245.0" x2="664.5" y2="244.0" stroke="#202028" stroke-width="2" /><path d="M739 288L748 286L753 288V304L744 306L739 304Z" fill="#C8C8CE" stroke="#8E8E98" stroke-width="0.8"/><path d="M739 288L748 286L753 288L744 290Z" fill="#E8E8EE"/><line x1="748.0" y1="290.0" x2="748.0" y2="305.0" stroke="#202028" stroke-width="2.4" /><line x1="748.0" y1="296.0" x2="751.5" y2="295.0" stroke="#202028" stroke-width="2" /><path d="M518 757L527 755L532 757V773L523 775L518 773Z" fill="#C8C8CE" stroke="#8E8E98" stroke-width="0.8"/><path d="M518 757L527 755L532 757L523 759Z" fill="#E8E8EE"/><line x1="521.0" y1="766.0" x2="530.0" y2="763.5" stroke="#202028" stroke-width="1.6" /><line x1="521.0" y1="769.0" x2="530.0" y2="766.5" stroke="#202028" stroke-width="1.6" /><line x1="521.0" y1="772.0" x2="530.0" y2="769.5" stroke="#202028" stroke-width="1.6" /><path d="M608 709L617 707L622 709V725L613 727L608 725Z" fill="#C8C8CE" stroke="#8E8E98" stroke-width="0.8"/><path d="M608 709L617 707L622 709L613 711Z" fill="#E8E8EE"/><line x1="611.0" y1="718.0" x2="620.0" y2="715.5" stroke="#202028" stroke-width="1.6" /><line x1="611.0" y1="721.0" x2="620.0" y2="718.5" stroke="#202028" stroke-width="1.6" /><line x1="611.0" y1="724.0" x2="620.0" y2="721.5" stroke="#202028" stroke-width="1.6" /><path d="M647 708L656 706L661 708V724L652 726L647 724Z" fill="#C8C8CE" stroke="#8E8E98" stroke-width="0.8"/><path d="M647 708L656 706L661 708L652 710Z" fill="#E8E8EE"/><line x1="656.0" y1="710.0" x2="656.0" y2="725.0" stroke="#202028" stroke-width="2.4" /><line x1="656.0" y1="716.0" x2="659.5" y2="715.0" stroke="#202028" stroke-width="2" /><path d="M737 756L746 754L751 756V772L742 774L737 772Z" fill="#C8C8CE" stroke="#8E8E98" stroke-width="0.8"/><path d="M737 756L746 754L751 756L742 758Z" fill="#E8E8EE"/><line x1="746.0" y1="758.0" x2="746.0" y2="773.0" stroke="#202028" stroke-width="2.4" /><line x1="746.0" y1="764.0" x2="749.5" y2="763.0" stroke="#202028" stroke-width="2" /><path d="M503.5 632L506 629V638L503.5 636Z" fill="#C4C4C8"/><path d="M764 632L761.5 629V638L764 636Z" fill="#C4C4C8"/></svg>
<svg class="a" style="left:0;top:0" width="1280" height="998">
<path d="M71 316L124 348M71 348L124 316" stroke="#000" stroke-width="0.9"/>
<rect x="94" y="329.5" width="6.5" height="5.5" fill="#fff" stroke="#000" stroke-width="1"/>
<path d="M96 331.3H95.3V333.2H96M98.5 331.3H99.2V333.2H98.5" stroke="#000" stroke-width="0.7" fill="none"/>
<path d="M122 755.5H134L122 766.5H134" stroke="#3A8FD8" stroke-width="1.3" fill="none"/>
<path d="M89 777L95 783L101 777M95 783V789" stroke="#50B850" stroke-width="1.2" fill="none"/>
<path d="M161 777L173 789M173 777L161 789" stroke="#D43030" stroke-width="1.2" fill="none"/>
<path d="M116.5 824L88 808" stroke="#30D030" stroke-width="4.5"/>
<path d="M73 799.5L93 800.5L86 814Z" fill="#30D830"/>
<path d="M86 801L93 800.5L90 812L85 814Z" fill="#106A10"/>
<path d="M117.5 824L146 808" stroke="#D02020" stroke-width="4.5"/>
<path d="M159.5 799.5L139 800.5L148 814Z" fill="#D82020"/>
<path d="M140 801L147 800L149 812L145 814Z" fill="#A01010"/>
<rect x="114.3" y="793" width="4.7" height="32" fill="#1A70C8"/>
<path d="M117 774L109 793Q117 797 124 793Z" fill="#2E95EC"/>
</svg>
<svg width="0" height="0" style="position:absolute"><defs><radialGradient id="gsph" cx="35%" cy="35%" r="70%"><stop offset="0" stop-color="#F4F8FC"/><stop offset="0.5" stop-color="#B0C4DC"/><stop offset="1" stop-color="#7088AA"/></radialGradient><linearGradient id="gcyl" x1="0" y1="0" x2="1" y2="0"><stop offset="0" stop-color="#8CA0BC"/><stop offset="0.35" stop-color="#E8F0F8"/><stop offset="1" stop-color="#7A90B0"/></linearGradient><radialGradient id="gtea" cx="40%" cy="35%" r="70%"><stop offset="0" stop-color="#9AE8A0"/><stop offset="0.4" stop-color="#2AA03A"/><stop offset="1" stop-color="#0E5A18"/></radialGradient><linearGradient id="gmet" x1="0" y1="0" x2="1" y2="1"><stop offset="0" stop-color="#F0F4FA"/><stop offset="1" stop-color="#A0B4CE"/></linearGradient></defs></svg>
<svg class="a" style="left:16px;top:52px" width="16" height="16" viewBox="0 0 16 16"><path d="M0.5 2.5H13L15.5 5V15.5H0.5Z" fill="url(#gmet)" stroke="#4A6A98"/><path d="M13 2.5V5H15.5" fill="none" stroke="#4A6A98"/></svg>
<svg class="a" style="left:39px;top:52px" width="16" height="16" viewBox="0 0 16 16"><path d="M1 5L4 3H9L10 5H13V14H1Z" fill="#D4C490" stroke="#8A7A4A"/><path d="M3 7H15L13 14H1Z" fill="#E8C838" stroke="#8A7020"/><path d="M11 1Q6 2 6 9" stroke="#1A2A5A" stroke-width="2" fill="none"/><path d="M3 8L6 13L9 8Z" fill="#1A2A5A"/></svg>
<svg class="a" style="left:62px;top:52px" width="16" height="16" viewBox="0 0 16 16"><rect x="1.5" y="1.5" width="13" height="13.5" fill="#5A84C8" stroke="#2A4A88"/><rect x="3.5" y="2.5" width="9" height="6" fill="#DCE8F6"/><path d="M5 4.5H11M5 6.5H11" stroke="#8AA0C8"/><rect x="4.5" y="11" width="7" height="4" fill="#E8F0FA"/><rect x="6" y="11.5" width="2" height="3" fill="#2A4A88"/></svg>
<svg class="a" style="left:91px;top:52px" width="16" height="16" viewBox="0 0 16 16"><path d="M5 1.5H11L12 5H4Z" fill="#fff" stroke="#6A7090"/><path d="M1.5 6H14.5L15.5 11L13 14H3L0.5 11Z" fill="#E8E8F0" stroke="#5A6088"/><path d="M3 11H13" stroke="#8A90B0"/></svg>
<svg class="a" style="left:114px;top:52px" width="16" height="16" viewBox="0 0 16 16"><path d="M0.5 2.5H13L15.5 5V14.5H0.5Z" fill="url(#gmet)" stroke="#4A6A98"/><circle cx="9.5" cy="9" r="3.5" fill="#C4D8F0" stroke="#4A5A7A" stroke-width="1.3"/><path d="M7 11.5L4 15" stroke="#8A6A30" stroke-width="2"/></svg>
<svg class="a" style="left:137px;top:52px" width="16" height="16" viewBox="0 0 16 16"><path d="M2 9H12V13H2Z" fill="#E0E4EE" stroke="#6070A0"/><rect x="4" y="3" width="7" height="6" fill="#F0D040" stroke="#A08020"/><path d="M11 2Q16 6 12 11" fill="#3A8AD8" stroke="#2060A0"/></svg>
<svg class="a" style="left:166px;top:52px" width="16" height="16" viewBox="0 0 16 16"><circle cx="12" cy="5" r="2.3" fill="none" stroke="#304060" stroke-width="1.3"/><circle cx="12" cy="11" r="2.3" fill="none" stroke="#304060" stroke-width="1.3"/><path d="M1 6L10 10M1 10L10 6" stroke="#607090" stroke-width="1.3"/></svg>
<svg class="a" style="left:189px;top:52px" width="16" height="16" viewBox="0 0 16 16"><path d="M0.5 1.5H10L12 3.5V11.5H0.5Z" fill="#E8F0F8" stroke="#4A6A98"/><path d="M3.5 4.5H13L15.5 7V15.5H3.5Z" fill="url(#gmet)" stroke="#3A5A98"/></svg>
<svg class="a" style="left:212px;top:52px" width="16" height="16" viewBox="0 0 16 16"><path d="M3 4L9 2L14 6L12 14L4 12Z" fill="#D8C070" stroke="#8A7040"/><rect x="6" y="6" width="6" height="6" fill="#C0D4EE" stroke="#4A6898"/></svg>
<svg class="a" style="left:235px;top:52px" width="16" height="16" viewBox="0 0 16 16"><path d="M14 2L7 10" stroke="#8A5A20" stroke-width="2.5"/><path d="M7 10L3 14L5 10Z" fill="#202020" stroke="#202020" stroke-width="1.5"/></svg>
<svg class="a" style="left:264px;top:52px" width="16" height="16" viewBox="0 0 16 16"><path d="M14.5 9Q14 2 8 2.5Q4 3 4 9" fill="none" stroke="#1E3A6A" stroke-width="3"/><path d="M0 8.5H8L4 15Z" fill="#1E3A6A"/></svg>
<svg class="a" style="left:284px;top:52px" width="16" height="16" viewBox="0 0 16 16"><path d="M5 7H10L7.5 10Z" fill="#222"/></svg>
<svg class="a" style="left:299px;top:52px" width="16" height="16" viewBox="0 0 16 16"><path d="M1.5 9Q2 2 8 2.5Q12 3 12 9" fill="none" stroke="#B4B4B0" stroke-width="3"/><path d="M16 8.5H8L12 15Z" fill="#B4B4B0"/></svg>
<svg class="a" style="left:319px;top:52px" width="16" height="16" viewBox="0 0 16 16"><path d="M5 7H10L7.5 10Z" fill="#B8B8B0"/></svg>
<svg class="a" style="left:342px;top:52px" width="16" height="16" viewBox="0 0 16 16"><path d="M3 6Q2 10 6 14H11L13 10V8L8 5Z" fill="#D89090" stroke="#A05050"/><path d="M12 1V8M8.5 4.5H15.5" stroke="#203868" stroke-width="1.5"/><path d="M9 12H13V15H9Z" fill="#2A5890"/></svg>
<svg class="a" style="left:366px;top:52px" width="16" height="16" viewBox="0 0 16 16"><circle cx="6.5" cy="7" r="4.5" fill="#D0DCE8" stroke="#404A58" stroke-width="1.5"/><path d="M10 10.5L14 15" stroke="#7A5A30" stroke-width="2"/><path d="M13 1V6M10.5 3.5H15.5M10.5 8H15.5" stroke="#222" stroke-width="1.1"/></svg>
<svg class="a" style="left:389px;top:52px" width="16" height="16" viewBox="0 0 16 16"><circle cx="6.5" cy="7" r="5" fill="#B8CCE0" stroke="#404A58" stroke-width="1.5"/><rect x="4" y="4.5" width="5" height="5" fill="none" stroke="#1A3A6A" stroke-width="1.3"/><path d="M10 10.5L14 15" stroke="#7A5A30" stroke-width="2"/><path d="M12 15L15 12V15Z" fill="#000"/></svg>
<svg class="a" style="left:411px;top:52px" width="16" height="16" viewBox="0 0 16 16"><circle cx="6.5" cy="7" r="5" fill="#B8CCE0" stroke="#404A58" stroke-width="1.5"/><path d="M10 10.5L14 15" stroke="#7A5A30" stroke-width="2"/><path d="M9 4L5 8M5 5V8H8" stroke="#1A3A6A" stroke-width="1.8" fill="none"/></svg>
<svg class="a" style="left:440px;top:52px" width="16" height="16" viewBox="0 0 16 16"><rect x="1" y="1" width="3" height="3" fill="#E03030"/><rect x="4" y="1" width="3" height="3" fill="#30B030"/><rect x="7" y="1" width="3" height="3" fill="#3050E0"/><rect x="10" y="1" width="3" height="3" fill="#E0C020"/><path d="M2 6H13V9H2Z" fill="#C8D0E0"/><text x="2" y="15" font-size="7" font-family="Liberation Sans" fill="#223">S</text><path d="M10 15L12 8L14 15M10.5 13H13.5" stroke="#222" fill="none"/></svg>
<svg class="a" style="left:463px;top:52px" width="16" height="16" viewBox="0 0 16 16"><rect x="0.5" y="0.5" width="15" height="15" fill="#F0F4FA" stroke="#2A3A6A"/><path d="M3 3H5.5V5.5H3ZM7 3H9.5V5.5H7ZM11 3H13.5V5.5H11ZM3 7H5.5V9.5H3ZM7 7H9.5V9.5H7ZM11 7H13.5V9.5H11ZM3 11H5.5V13.5H3ZM7 11H9.5V13.5H7ZM11 11H13.5V13.5H11Z" fill="#5A6A8A"/></svg>
<svg class="a" style="left:486px;top:52px" width="16" height="16" viewBox="0 0 16 16"><rect x="1.5" y="1.5" width="10" height="13" fill="#F0F4FA" stroke="#2A3A6A"/><path d="M4 4H6V6H4ZM4 8H6V10H4ZM8 4H10V6H8Z" fill="#3A5A9A"/><path d="M10 4Q15 6 13 12" fill="none" stroke="#2A3A6A" stroke-width="1.3"/><rect x="11" y="11" width="4" height="4" fill="#fff" stroke="#222"/></svg>
<svg class="a" style="left:515px;top:52px" width="16" height="16" viewBox="0 0 16 16"><rect x="0.5" y="0.5" width="15" height="15" rx="3" fill="#1E58B0" stroke="#0E2A60"/><rect x="2" y="2" width="12" height="6" rx="2" fill="#4A88D8"/><text x="8" y="13.5" font-size="13" font-weight="bold" font-family="Liberation Sans" fill="#fff" text-anchor="middle">?</text></svg>
<svg class="a" style="left:556px;top:52px" width="16" height="16" viewBox="0 0 16 16"><path d="M1.5 1V15M14.5 1V15M1.5 5H14.5" stroke="#000" stroke-width="1.5" fill="none"/></svg>
<svg class="a" style="left:579px;top:52px" width="16" height="16" viewBox="0 0 16 16"><path d="M4.5 1L1 4.5M15 11.5L11.5 15M3 3L13 13" stroke="#000" stroke-width="1.5" fill="none"/><path d="M3 3L7 4L4 7Z M13 13L9 12L12 9Z" fill="#000"/></svg>
<svg class="a" style="left:601px;top:52px" width="16" height="16" viewBox="0 0 16 16"><path d="M5 15V9L13 4V15M5 15H15" stroke="#000" stroke-width="1.2" fill="none"/><path d="M5 9V4M13 4V1" stroke="#000" stroke-dasharray="1 1"/><text x="0" y="9" font-size="5" font-family="Liberation Sans">Y</text><text x="0" y="15" font-size="5" font-family="Liberation Sans">0</text><text x="5" y="4" font-size="5" font-family="Liberation Sans">0</text><text x="12" y="4" font-size="5" font-family="Liberation Sans">X</text></svg>
<svg class="a" style="left:630px;top:52px" width="16" height="16" viewBox="0 0 16 16"><circle cx="8" cy="8" r="6.8" fill="#F2F0E8" stroke="#000" stroke-width="1.3"/><path d="M8.5 8.5L4 4" stroke="#000" stroke-width="1.4"/><path d="M3 3L7.5 4L4 7.5Z" fill="#000"/></svg>
<svg class="a" style="left:654px;top:52px" width="16" height="16" viewBox="0 0 16 16"><circle cx="8" cy="8" r="6.8" fill="#F2F0E8" stroke="#000" stroke-width="1.3"/><path d="M4 4L12 12" stroke="#000" stroke-width="1.4"/><path d="M3 3L7.5 4L4 7.5Z M13 13L8.5 12L12 8.5Z" fill="#000"/></svg>
<svg class="a" style="left:677px;top:52px" width="16" height="16" viewBox="0 0 16 16"><path d="M1 15H15M2 15L10 2" stroke="#000" stroke-width="1.3" fill="none"/><path d="M9 4Q15 8 13 15" stroke="#000" stroke-width="1.2" fill="none"/><path d="M9 3L12 4.5L9.5 6.5Z M13 15L11.5 11.5L14.5 12Z" fill="#000"/></svg>
<svg class="a" style="left:705px;top:52px" width="16" height="16" viewBox="0 0 16 16"><path d="M1.5 1V15M14.5 1V15M1.5 4.5H14.5" stroke="#000" stroke-width="1.5" fill="none"/><path d="M4 1L12 7L8 8L13 15L5 9L9 8Z" fill="#F0D020" stroke="#7A6010" stroke-width="0.8"/></svg>
<svg class="a" style="left:729px;top:52px" width="16" height="16" viewBox="0 0 16 16"><path d="M1.5 1V15M14.5 5V15M8 9V15M1.5 5H14.5M1.5 11H8" stroke="#000" stroke-width="1.3" fill="none"/></svg>
<svg class="a" style="left:752px;top:52px" width="16" height="16" viewBox="0 0 16 16"><path d="M1.5 1V15M8 1V15M14.5 1V15M1.5 4H14.5" stroke="#000" stroke-width="1.3" fill="none"/></svg>
<svg class="a" style="left:780px;top:52px" width="16" height="16" viewBox="0 0 16 16"><path d="M1 8L4 6" stroke="#000" stroke-width="1.5"/><path d="M1 7L4 5L3 9Z" fill="#000"/><path d="M5 3L13 9L9 10L14 16L6 10L10 9Z" fill="#F0D020" stroke="#7A6010" stroke-width="0.8"/><text x="11" y="6" font-size="7" font-family="Liberation Sans" fill="#1A2A6A">A</text></svg>
<svg class="a" style="left:804px;top:52px" width="16" height="16" viewBox="0 0 16 16"><rect x="0.5" y="2.5" width="15" height="11" fill="#C8DCF4" stroke="#2A4A8A"/><path d="M8.5 2.5V13.5" stroke="#2A4A8A"/><circle cx="4.5" cy="8" r="2.8" fill="none" stroke="#1A3A7A"/><path d="M4.5 4.5V11.5M1 8H8" stroke="#1A3A7A" stroke-width="0.8"/><text x="9.5" y="12" font-size="8" font-family="Liberation Sans" fill="#1A3A7A">.1</text></svg>
<svg class="a" style="left:826px;top:52px" width="16" height="16" viewBox="0 0 16 16"><circle cx="8" cy="8" r="6.8" fill="#F2F0E8" stroke="#222" stroke-width="1.3"/><path d="M8 4.5V11.5M4.5 8H11.5" stroke="#000" stroke-width="2"/></svg>
<svg class="a" style="left:855px;top:52px" width="16" height="16" viewBox="0 0 16 16"><path d="M1.5 10V16M14.5 10V16M1.5 13H14.5" stroke="#000" stroke-width="1.4"/><path d="M2 13L5 11V15ZM14 13L11 11V15Z" fill="#000"/><text x="8" y="9.5" font-size="10" font-weight="bold" font-family="Liberation Sans" fill="#1A3A8A" text-anchor="middle">A</text></svg>
<svg class="a" style="left:879px;top:52px" width="16" height="16" viewBox="0 0 16 16"><path d="M1.5 10V16M14.5 10V16M1.5 13H14.5" stroke="#000" stroke-width="1.4"/><path d="M2 13L5 11V15ZM14 13L11 11V15Z" fill="#000"/><path d="M14 1L7 10" stroke="#D8B020" stroke-width="3"/><path d="M7 10L5.5 12" stroke="#222" stroke-width="2"/></svg>
<svg class="a" style="left:902px;top:52px" width="16" height="16" viewBox="0 0 16 16"><path d="M1.5 1V15M14.5 1V15M1.5 4H14.5M1.5 9H14.5" stroke="#000" stroke-width="1.3" fill="none"/><path d="M2 4L5 2.5V5.5ZM14 4L11 2.5V5.5ZM2 9L5 7.5V10.5ZM14 9L11 7.5V10.5Z" fill="#000"/><path d="M1.5 3.5H14.5" stroke="#4A70B8" stroke-width="1"/></svg>
<svg class="a" style="left:1031px;top:52px" width="16" height="16" viewBox="0 0 16 16"><path d="M1.5 10V16M14.5 10V16M1.5 13H14.5" stroke="#000" stroke-width="1.4"/><path d="M2 13L5 11V15ZM14 13L11 11V15Z" fill="#000"/><path d="M15 1L6 11" stroke="#7A5A40" stroke-width="2"/><path d="M6 11L4 13" stroke="#111" stroke-width="2"/></svg>
<svg class="a" style="left:1072px;top:52px" width="16" height="16" viewBox="0 0 16 16"><circle cx="6.5" cy="6.5" r="5.5" fill="#B4C8DC" stroke="#3A4450" stroke-width="1.5"/><rect x="4" y="4" width="5" height="5" fill="none" stroke="#1A3A7A" stroke-width="1.4"/><path d="M10 10L14.5 14.5" stroke="#6A4A28" stroke-width="2.2"/></svg>
<svg class="a" style="left:1095px;top:52px" width="16" height="16" viewBox="0 0 16 16"><circle cx="6.5" cy="6.5" r="5.5" fill="#B4C8DC" stroke="#3A4450" stroke-width="1.5"/><path d="M3.5 5V3.5H5M8 3.5H9.5V5M9.5 8V9.5H8M5 9.5H3.5V8" stroke="#1A3A7A" fill="none" stroke-width="1.2"/><path d="M10 10L14.5 14.5" stroke="#6A4A28" stroke-width="2.2"/></svg>
<svg class="a" style="left:1118px;top:52px" width="16" height="16" viewBox="0 0 16 16"><circle cx="6.5" cy="6.5" r="5.5" fill="#B4C8DC" stroke="#3A4450" stroke-width="1.5"/><path d="M4 4L9 9M9 4L4 9" stroke="#1A3A7A" stroke-width="1.8"/><path d="M10 10L14.5 14.5" stroke="#6A4A28" stroke-width="2.2"/></svg>
<svg class="a" style="left:1141px;top:52px" width="16" height="16" viewBox="0 0 16 16"><circle cx="6.5" cy="6.5" r="5.5" fill="#B4C8DC" stroke="#3A4450" stroke-width="1.5"/><path d="M4 4L9 9M9 4L4 9M6.5 3V10M3 6.5H10" stroke="#1A3A7A" stroke-width="1"/><path d="M10 10L14.5 14.5" stroke="#6A4A28" stroke-width="2.2"/></svg>
<svg class="a" style="left:1170px;top:52px" width="16" height="16" viewBox="0 0 16 16"><circle cx="6.5" cy="6.5" r="5.5" fill="#B4C8DC" stroke="#3A4450" stroke-width="1.5"/><path d="M6.5 3V10M3 6.5H10" stroke="#1A3A7A" stroke-width="2"/><path d="M10 10L14.5 14.5" stroke="#6A4A28" stroke-width="2.2"/></svg>
<svg class="a" style="left:1193px;top:52px" width="16" height="16" viewBox="0 0 16 16"><circle cx="6.5" cy="6.5" r="5.5" fill="#B4C8DC" stroke="#3A4450" stroke-width="1.5"/><path d="M3 6.5H10" stroke="#1A3A7A" stroke-width="2"/><path d="M10 10L14.5 14.5" stroke="#6A4A28" stroke-width="2.2"/></svg>
<svg class="a" style="left:1222px;top:52px" width="16" height="16" viewBox="0 0 16 16"><circle cx="6.5" cy="6.5" r="5.5" fill="#B4C8DC" stroke="#3A4450" stroke-width="1.5"/><path d="M4.5 3H7.5L9 4.5V10H4.5Z" fill="#fff" stroke="#1A3A7A"/><path d="M10 10L14.5 14.5" stroke="#6A4A28" stroke-width="2.2"/></svg>
<svg class="a" style="left:1245px;top:52px" width="16" height="16" viewBox="0 0 16 16"><circle cx="6.5" cy="6.5" r="5.5" fill="#B4C8DC" stroke="#3A4450" stroke-width="1.5"/><path d="M6.5 2.5V10.5M2.5 6.5H10.5" stroke="#000" stroke-width="1.5"/><path d="M6.5 1.5L5 3.5H8ZM6.5 11.5L5 9.5H8ZM1.5 6.5L3.5 5V8ZM11.5 6.5L9.5 5V8Z" fill="#000"/><path d="M10 10L14.5 14.5" stroke="#6A4A28" stroke-width="2.2"/></svg>
<svg class="a" style="left:16px;top:80px" width="16" height="16" viewBox="0 0 16 16"><path d="M1 10L8 6L15 10L8 14Z" fill="#B8C8DC" stroke="#5A6A88"/><path d="M1 7L8 3L15 7L8 11Z" fill="#D8E0EC" stroke="#5A6A88"/><path d="M1 4.5L8 1L15 4.5L8 8Z" fill="#C0CCE0" stroke="#5A6A88"/></svg>
<svg class="a" style="left:338px;top:80px" width="16" height="16" viewBox="0 0 16 16"><path d="M1 11L8 7L15 11L8 15Z" fill="#E8E000" stroke="#6A6A30"/><path d="M1 8L8 4L15 8L8 12Z" fill="#D8E0EC" stroke="#5A6A88"/><path d="M1 5L8 1L15 5L8 9Z" fill="#C0CCE0" stroke="#5A6A88"/><path d="M1 15L4 12M2 12H4V14" stroke="#1A3A7A" stroke-width="1.2" fill="none"/></svg>
<svg class="a" style="left:361px;top:80px" width="16" height="16" viewBox="0 0 16 16"><path d="M1 11L8 7L15 11L8 15Z" fill="#C8D4E4" stroke="#5A6A88"/><path d="M1 8L8 4L15 8L8 12Z" fill="#D8E0EC" stroke="#5A6A88"/><path d="M1 5L8 1L15 5L8 9Z" fill="#C0CCE0" stroke="#5A6A88"/><path d="M6 6Q8 1 11 5" stroke="#1A3A7A" stroke-width="1.8" fill="none"/></svg>
<svg class="a" style="left:402px;top:80px" width="16" height="16" viewBox="0 0 16 16"><path d="M1.5 5.5L5.5 1.5H15.5V11.5L11.5 15.5H1.5Z" fill="url(#gmet)" stroke="#5A6A88"/><path d="M1.5 5.5H11.5V15.5" stroke="#5A6A88" fill="none"/><path d="M11.5 5.5L15.5 1.5V11.5L11.5 15.5Z" fill="#8098B8" stroke="#5A6A88"/><path d="M1.5 5.5L5.5 1.5H15.5L11.5 5.5Z" fill="#E4ECF6" stroke="#5A6A88"/></svg>
<svg class="a" style="left:426px;top:80px" width="16" height="16" viewBox="0 0 16 16"><circle cx="8" cy="8" r="7.3" fill="url(#gsph)" stroke="#7088A8" stroke-width="0.8"/></svg>
<svg class="a" style="left:449px;top:80px" width="16" height="16" viewBox="0 0 16 16"><path d="M1.5 3.5V13Q8 17 14.5 13V3.5" fill="url(#gcyl)" stroke="#6A80A0"/><ellipse cx="8" cy="3.5" rx="6.5" ry="2.5" fill="#E0E8F2" stroke="#6A80A0"/></svg>
<svg class="a" style="left:472px;top:80px" width="16" height="16" viewBox="0 0 16 16"><path d="M8 0.5L1.5 13Q8 17 14.5 13Z" fill="url(#gcyl)" stroke="#6A80A0"/></svg>
<svg class="a" style="left:495px;top:80px" width="16" height="16" viewBox="0 0 16 16"><path d="M1.5 1.5L15.5 11V15H5L1.5 12Z" fill="#A8BCD6" stroke="#4A5A78"/><path d="M1.5 1.5L5 4.5L15.5 11M5 4.5V15" stroke="#4A5A78" fill="none"/><path d="M1.5 1.5L5 4.5V15L1.5 12Z" fill="#E0E8F2"/></svg>
<svg class="a" style="left:517px;top:80px" width="16" height="16" viewBox="0 0 16 16"><ellipse cx="8" cy="8.5" rx="7.3" ry="6" fill="url(#gsph)" stroke="#6A84A4"/><ellipse cx="8.5" cy="8" rx="2.8" ry="2" fill="#7890B0" stroke="#5A6A88"/></svg>
<svg class="a" style="left:546px;top:80px" width="16" height="16" viewBox="0 0 16 16"><path d="M1.5 5.5L4.5 2.5H10.5V12.5L7.5 15.5H1.5Z" fill="#fff" stroke="#111" stroke-width="1.2"/><path d="M1.5 5.5H7.5V15.5M7.5 5.5L10.5 2.5" stroke="#111" fill="none" stroke-width="1.2"/><path d="M13.5 14V2M11 5L13.5 1L16 5Z" stroke="#1A2A4A" stroke-width="1.8" fill="#1A2A4A"/></svg>
<svg class="a" style="left:570px;top:80px" width="16" height="16" viewBox="0 0 16 16"><path d="M3 5Q8 0 13 5" stroke="#2A70C0" stroke-width="3" fill="none"/><path d="M12 2L15 6L10 6Z" fill="#2A70C0"/><path d="M2 7L8 4L14 7V12L8 15L2 12Z" fill="#4A98E0" stroke="#1A5A9A"/><path d="M2 7L8 10L14 7M8 10V15" stroke="#1A5A9A" fill="none"/><rect x="6" y="8" width="4" height="3" fill="#E8F0FA"/></svg>
<svg class="a" style="left:599px;top:80px" width="16" height="16" viewBox="0 0 16 16"><path d="M1 10L9 7L15 10L7 14Z" fill="#C8D0DC" stroke="#5A6070"/><path d="M1 10V12L7 16L15 12V10" fill="#9AA8BC" stroke="#5A6070"/><path d="M2 1L12 11" stroke="#8A4A30" stroke-width="2.5"/><path d="M10 9L14 13" stroke="#D0D8E0" stroke-width="2"/></svg>
<svg class="a" style="left:622px;top:80px" width="16" height="16" viewBox="0 0 16 16"><path d="M1 9L8 6L15 9L8 12Z" fill="#3A80D0" stroke="#1A4A8A"/><rect x="5" y="0.5" width="6" height="7" fill="#5A9AE0" stroke="#1A4A8A"/><path d="M5.5 12V15.5H10.5V12" fill="#3A80D0" stroke="#1A4A8A"/></svg>
<svg class="a" style="left:645px;top:80px" width="16" height="16" viewBox="0 0 16 16"><path d="M0.5 5L4 3H8V14L4 16H0.5Z" fill="#2A6AC0" stroke="#1A3A7A"/><path d="M5 4L9 2H13V13L9 15H5Z" fill="#4A90E0" stroke="#1A3A7A"/><path d="M9 5L12.5 3H15.5V13L12 15H9Z" fill="#6AAAF0" stroke="#1A3A7A"/></svg>
<svg class="a" style="left:674px;top:80px" width="16" height="16" viewBox="0 0 16 16"><rect x="1.5" y="3.5" width="13" height="11" fill="#C8DCF0" stroke="#2A4A7A"/><path d="M3 8L8 6L12 8V13H3Z" fill="#3A80C8"/><path d="M14 1L8 10" stroke="#C8A020" stroke-width="2.5"/></svg>
<svg class="a" style="left:698px;top:80px" width="16" height="16" viewBox="0 0 16 16"><rect x="1.5" y="1.5" width="13" height="13" fill="#C8DCF0" stroke="#2A4A7A"/><path d="M7 6L11 4L15 6V13L11 15L7 13Z" fill="#3A90D8"/><path d="M2 4H5M2 7H5M2 10H5" stroke="#2A4A7A"/></svg>
<svg class="a" style="left:720px;top:80px" width="16" height="16" viewBox="0 0 16 16"><rect x="1.5" y="1.5" width="13" height="13" fill="#C8DCF0" stroke="#2A4A7A"/><path d="M4 6L8 4L12 6V12L8 14L4 12Z" fill="#3A90D8"/></svg>
<svg class="a" style="left:4px;top:116px" width="16" height="16" viewBox="0 0 16 16"><path d="M1 15H15" stroke="#222"/><path d="M3 12L11 3L14 6L6 14Z" fill="#E8D070" stroke="#806020"/><path d="M3 12L6 9L8 11L6 14Z" fill="#E8A0A0" stroke="#A06060"/></svg>
<svg class="a" style="left:4px;top:138px" width="16" height="16" viewBox="0 0 16 16"><circle cx="5" cy="5" r="3.3" fill="#fff" stroke="#111" stroke-width="1.4"/><circle cx="9" cy="11" r="3.3" fill="#fff" stroke="#111" stroke-width="1.4"/><path d="M9 2Q14 3 13 8" stroke="#2A4A8A" stroke-width="1.5" fill="none"/><path d="M11 7H15L13 10Z" fill="#2A4A8A"/></svg>
<svg class="a" style="left:4px;top:160px" width="16" height="16" viewBox="0 0 16 16"><path d="M7 2V14H2Z" fill="#fff" stroke="#111" stroke-width="1.3"/><path d="M9 2V14H14Z" fill="#fff" stroke="#111" stroke-width="1.3"/><path d="M8 0V16" stroke="#4A90D8" stroke-width="1"/></svg>
<svg class="a" style="left:4px;top:182px" width="16" height="16" viewBox="0 0 16 16"><path d="M1.5 14.5V10Q1.5 8 4 8H5V5Q5 1.5 8.5 1.5Q12 1.5 12 5V8H14.5V14.5Z" fill="none" stroke="#111" stroke-width="1.3"/><path d="M3.5 12.5V11Q3.5 10 5 10H7V5Q7 3.5 8.5 3.5Q10 3.5 10 5V10H12.5V12.5Z" fill="#E8F0F8" stroke="#2A5AA0" stroke-width="1.1"/></svg>
<svg class="a" style="left:4px;top:204px" width="16" height="16" viewBox="0 0 16 16"><rect x="1.5" y="1.5" width="5" height="5" fill="#fff" stroke="#111" stroke-width="1.3"/><rect x="9.5" y="1.5" width="5" height="5" fill="#fff" stroke="#111" stroke-width="1.3"/><rect x="1.5" y="9.5" width="5" height="5" fill="#fff" stroke="#111" stroke-width="1.3"/><rect x="9.5" y="9.5" width="5" height="5" fill="#fff" stroke="#111" stroke-width="1.3"/></svg>
<svg class="a" style="left:4px;top:226px" width="16" height="16" viewBox="0 0 16 16"><path d="M8 1L11 4H9.5V6.5H12V5L15 8L12 11V9.5H9.5V12H11L8 15L5 12H6.5V9.5H4V11L1 8L4 5V6.5H6.5V4H5Z" fill="#4A6A9A" stroke="#2A4A7A" stroke-width="0.6"/></svg>
<svg class="a" style="left:4px;top:248px" width="16" height="16" viewBox="0 0 16 16"><path d="M4 4A6 6 0 1 0 9 2.2" fill="none" stroke="#3A5A8A" stroke-width="2.5"/><path d="M1 2L6 1L5 6Z" fill="#3A5A8A"/></svg>
<svg class="a" style="left:4px;top:270px" width="16" height="16" viewBox="0 0 16 16"><rect x="1.5" y="1.5" width="13" height="13" fill="#D0DCEC" stroke="#2A4A7A"/><rect x="1.5" y="6.5" width="8" height="8" fill="#fff" stroke="#222" stroke-dasharray="1 1"/></svg>
<svg class="a" style="left:4px;top:292px" width="16" height="16" viewBox="0 0 16 16"><path d="M1.5 1.5H8L14 14.5H1.5Z" fill="#C8D8EC" stroke="#111" stroke-width="1.3"/><path d="M5 3V14" stroke="#222" stroke-dasharray="1 1"/></svg>
<svg class="a" style="left:4px;top:314px" width="16" height="16" viewBox="0 0 16 16"><path d="M1 8H15" stroke="#2A5AA0" stroke-width="1.2" stroke-dasharray="2 1"/><path d="M6 14L11 2" stroke="#1A3A6A" stroke-width="1.6"/></svg>
<svg class="a" style="left:4px;top:336px" width="16" height="16" viewBox="0 0 16 16"><path d="M1 8H9" stroke="#2A5AA0" stroke-width="1.2" stroke-dasharray="2 1"/><path d="M9 14L14 2" stroke="#1A3A6A" stroke-width="1.6"/></svg>
<svg class="a" style="left:4px;top:358px" width="16" height="16" viewBox="0 0 16 16"><rect x="1.5" y="4.5" width="13" height="10" fill="#DCE6F2" stroke="#111" stroke-width="1.4"/><rect x="6" y="2" width="4" height="4" fill="#2A5A9A"/></svg>
<svg class="a" style="left:4px;top:380px" width="16" height="16" viewBox="0 0 16 16"><rect x="1.5" y="4.5" width="13" height="10" fill="#DCE6F2" stroke="#111" stroke-width="1.4"/><rect x="1" y="2" width="4" height="4" fill="#2A5A9A"/><rect x="11" y="2" width="4" height="4" fill="#2A5A9A"/></svg>
<svg class="a" style="left:4px;top:402px" width="16" height="16" viewBox="0 0 16 16"><path d="M2 15V6L6 2H15" fill="none" stroke="#111" stroke-width="1.5"/><path d="M3 6H6V3" stroke="#444" stroke-dasharray="1 1" fill="none"/><path d="M2 6L6 2" stroke="#2A5AA0" stroke-width="1.5"/></svg>
<svg class="a" style="left:4px;top:424px" width="16" height="16" viewBox="0 0 16 16"><path d="M2 15V9Q2 2 9 2H15" fill="none" stroke="#111" stroke-width="1.5"/><path d="M2 9Q2 2 9 2" fill="none" stroke="#2A5AA0" stroke-width="2"/></svg>
<svg class="a" style="left:4px;top:446px" width="16" height="16" viewBox="0 0 16 16"><path d="M2 14L9 7" stroke="#C83020" stroke-width="4"/><path d="M1 10L5 8L8 12L5 15Z" fill="#E8B020"/><path d="M11 2L13 5M14 3L11 5M12 1V6" stroke="#6A7AA0"/></svg>
<svg class="a" style="left:4px;top:486px" width="16" height="16" viewBox="0 0 16 16"><rect x="1.5" y="1.5" width="13" height="9" fill="#fff" stroke="#111" stroke-width="1.3"/><path d="M8 4L3 15H13Z" fill="none" stroke="#111" stroke-width="1.3"/></svg>
<svg class="a" style="left:4px;top:508px" width="16" height="16" viewBox="0 0 16 16"><path d="M1 5L4 2H8V7L5 10H1Z" fill="#fff" stroke="#111"/><path d="M1 5H5V10M5 5L8 2" stroke="#111" fill="none"/><path d="M11 6L8 14Q11 16 14 14Z" fill="#fff" stroke="#111"/></svg>
<svg class="a" style="left:4px;top:530px" width="16" height="16" viewBox="0 0 16 16"><path d="M8 1.5L14.5 4.5V11.5L8 14.5L1.5 11.5V4.5Z" fill="#fff" stroke="#111" stroke-width="1.3"/><path d="M1.5 4.5L8 7.5L14.5 4.5M8 7.5V14.5" stroke="#111" fill="none"/></svg>
<svg class="a" style="left:4px;top:552px" width="16" height="16" viewBox="0 0 16 16"><path d="M1 5L7 2L15 5V11L9 14L1 11Z" fill="#4A8AD0"/><path d="M1 5L9 8L15 5L7 2Z" fill="#7AB0E8"/><path d="M9 8V14L15 11V5Z" fill="#2A5A9A"/></svg>
<svg class="a" style="left:4px;top:574px" width="16" height="16" viewBox="0 0 16 16"><circle cx="7.5" cy="7.5" r="6" fill="#2A6AB0"/><circle cx="5.5" cy="5.5" r="2.5" fill="#9AC8F0"/><ellipse cx="10" cy="14" rx="4" ry="1" fill="#8A8A8A"/></svg>
<svg class="a" style="left:4px;top:596px" width="16" height="16" viewBox="0 0 16 16"><path d="M8 1L15 4.5V11.5L8 15L1 11.5V4.5Z" fill="#6A9AD0" stroke="#111" stroke-width="1.2"/><path d="M1 4.5L8 8L15 4.5M8 8V15" stroke="#111" fill="none"/><path d="M8 8V15L1 11.5V4.5Z" fill="#3A6AA8"/></svg>
<svg class="a" style="left:4px;top:618px" width="16" height="16" viewBox="0 0 16 16"><circle cx="7.5" cy="7.5" r="6" fill="#6A9AD0" stroke="#1A3A6A"/><path d="M3 3L12 12M12 3L3 12" stroke="#1A3A6A"/><ellipse cx="10" cy="14" rx="4" ry="1" fill="#8A8A8A"/></svg>
<svg class="a" style="left:4px;top:658px" width="16" height="16" viewBox="0 0 16 16"><text x="8" y="15" font-size="17" font-family="Liberation Sans" fill="#111" text-anchor="middle">A</text></svg>
<svg class="a" style="left:4px;top:680px" width="16" height="16" viewBox="0 0 16 16"><text x="6" y="15" font-size="16" font-family="Liberation Sans" fill="#111" text-anchor="middle">A</text><path d="M13 2V14M11 2H15M11 14H15" stroke="#1A3A6A" stroke-width="1.2"/></svg>
<svg class="a" style="left:4px;top:702px" width="16" height="16" viewBox="0 0 16 16"><text x="7" y="15" font-size="16" font-family="Liberation Sans" fill="#111" text-anchor="middle">A</text><path d="M15 2L8 14" stroke="#D0B020" stroke-width="2"/></svg>
<svg class="a" style="left:4px;top:724px" width="16" height="16" viewBox="0 0 16 16"><circle cx="6.5" cy="6.5" r="5.5" fill="#D4DEEA" stroke="#3A4450" stroke-width="1.3"/><text x="6.5" y="9" font-size="7" font-weight="bold" font-family="Liberation Sans" fill="#1A2A4A" text-anchor="middle">ab</text><text x="13" y="9" font-size="7" font-family="Liberation Sans" fill="#111">c</text><path d="M10 10L14 15" stroke="#6A4A28" stroke-width="2"/></svg>
<svg class="a" style="left:4px;top:746px" width="16" height="16" viewBox="0 0 16 16"><text x="7" y="14" font-size="16" font-family="Liberation Sans" fill="#111" text-anchor="middle">A</text><path d="M15 6L8 13" stroke="#8A6A30" stroke-width="2"/><path d="M8 13L6 15" stroke="#111" stroke-width="2"/></svg>
<svg class="a" style="left:4px;top:768px" width="16" height="16" viewBox="0 0 16 16"><rect x="1.5" y="1.5" width="13" height="13" fill="#F0F4FA" stroke="#8A9AB8" stroke-dasharray="1 1"/><text x="8" y="13" font-size="11" font-family="Liberation Sans" fill="#111" text-anchor="middle">A</text></svg>
<svg class="a" style="left:4px;top:790px" width="16" height="16" viewBox="0 0 16 16"><rect x="1.5" y="1.5" width="12" height="13" fill="#E8F0FA" stroke="#1A3A6A" stroke-width="1.2"/><text x="8" y="13" font-size="13" font-family="Liberation Sans" fill="#111" text-anchor="middle">A</text><rect x="12" y="6" width="3" height="3" fill="#1A3A6A"/><rect x="0" y="13" width="3" height="3" fill="#1A3A6A"/></svg>
<svg class="a" style="left:4px;top:812px" width="16" height="16" viewBox="0 0 16 16"><path d="M1 2H15" stroke="#D0B020" stroke-width="2.5"/><path d="M2 2V4M5 2V4M8 2V4M11 2V4M14 2V4" stroke="#6A5010"/><path d="M3 5V14H12" stroke="#1A3A6A" stroke-width="1.5" fill="none"/><path d="M6 8V12H9" stroke="#111" fill="none"/><path d="M10 13L15 7" stroke="#111" stroke-width="1.5"/></svg>
<svg class="a" style="left:30px;top:116px" width="16" height="16" viewBox="0 0 16 16"><path d="M3 13L13 3" stroke="#111" stroke-width="1.5"/><rect x="1" y="11" width="4" height="4" fill="#1A4A7A"/><rect x="11" y="1" width="4" height="4" fill="#1A4A7A"/></svg>
<svg class="a" style="left:30px;top:138px" width="16" height="16" viewBox="0 0 16 16"><path d="M1 15L15 1" stroke="#111" stroke-width="1.5"/><path d="M0 16L4 15L1 12Z M16 0L12 1L15 4Z" fill="#111"/><rect x="5" y="8" width="3" height="3" fill="#1A4A7A"/><rect x="8" y="5" width="3" height="3" fill="#1A4A7A"/></svg>
<svg class="a" style="left:30px;top:160px" width="16" height="16" viewBox="0 0 16 16"><path d="M3 12H9Q14 12 13 7Q12 3 9 4" stroke="#111" stroke-width="1.4" fill="none"/><rect x="1" y="10" width="4" height="4" fill="#1A4A7A"/><rect x="8" y="10" width="4" height="4" fill="#1A4A7A"/><rect x="8" y="2" width="4" height="4" fill="#1A4A7A"/></svg>
<svg class="a" style="left:30px;top:182px" width="16" height="16" viewBox="0 0 16 16"><path d="M8 1.5L14.5 6.5L12 14.5H4L1.5 6.5Z" fill="#D0DCEA" stroke="#111" stroke-width="1.4"/></svg>
<svg class="a" style="left:30px;top:204px" width="16" height="16" viewBox="0 0 16 16"><rect x="2" y="4" width="12" height="8" fill="#D0DCEA" stroke="#111" stroke-width="1.4" transform="rotate(-5 8 8)"/><rect x="0" y="10" width="4" height="4" fill="#1A4A7A"/><rect x="12" y="2" width="4" height="4" fill="#1A4A7A"/></svg>
<svg class="a" style="left:30px;top:226px" width="16" height="16" viewBox="0 0 16 16"><path d="M3 14Q3 3 13 3" stroke="#111" stroke-width="1.4" fill="none"/><rect x="1" y="12" width="4" height="4" fill="#1A4A7A"/><rect x="4" y="6" width="4" height="4" fill="#1A4A7A"/><rect x="11" y="1" width="4" height="4" fill="#1A4A7A"/></svg>
<svg class="a" style="left:30px;top:248px" width="16" height="16" viewBox="0 0 16 16"><circle cx="8" cy="8" r="6.5" fill="#E0E8F2" stroke="#111" stroke-width="1.5"/><path d="M8 8L12 4" stroke="#111" stroke-width="1.3"/><rect x="11" y="2" width="3" height="3" fill="#1A4A7A"/></svg>
<svg class="a" style="left:30px;top:270px" width="16" height="16" viewBox="0 0 16 16"><path d="M4 3Q8 0 10 3Q15 3 13 8Q15 13 10 13Q7 16 4 13Q0 12 2 8Q0 4 4 3Z" fill="#E0E8F2" stroke="#111" stroke-width="1.3"/></svg>
<svg class="a" style="left:30px;top:292px" width="16" height="16" viewBox="0 0 16 16"><path d="M1 14Q4 3 7 8Q10 13 15 2" stroke="#111" stroke-width="1.4" fill="none"/></svg>
<svg class="a" style="left:30px;top:314px" width="16" height="16" viewBox="0 0 16 16"><ellipse cx="8" cy="8" rx="6.5" ry="4.5" fill="#E0E8F2" stroke="#111" stroke-width="1.6"/><rect x="0" y="6" width="3" height="4" fill="#1A4A7A"/><rect x="13" y="6" width="3" height="4" fill="#1A4A7A"/></svg>
<svg class="a" style="left:30px;top:336px" width="16" height="16" viewBox="0 0 16 16"><path d="M4 12Q-1 8 4 5Q8 2 12 5Q16 9 11 12" stroke="#111" stroke-width="1.6" fill="none"/><rect x="1" y="10" width="4" height="4" fill="#1A4A7A"/><rect x="1" y="3" width="4" height="4" fill="#1A4A7A"/></svg>
<svg class="a" style="left:30px;top:358px" width="16" height="16" viewBox="0 0 16 16"><rect x="3" y="1.5" width="10" height="9" fill="#fff" stroke="#4A6A8A"/><rect x="1" y="5" width="7" height="5" fill="#E0E060" stroke="#5A5A20"/><circle cx="9" cy="11" r="3.5" fill="#B0D070" stroke="#5A6A20"/><path d="M12 15H16V11Z" fill="#000"/></svg>
<svg class="a" style="left:30px;top:380px" width="16" height="16" viewBox="0 0 16 16"><rect x="1" y="2" width="8" height="6" fill="#E0E060" stroke="#5A5A20"/><circle cx="10" cy="10" r="4" fill="#B0D070" stroke="#5A6A20"/><rect x="2" y="7" width="3" height="3" fill="#1A4A7A"/></svg>
<svg class="a" style="left:30px;top:402px" width="16" height="16" viewBox="0 0 16 16"><rect x="6.5" y="6.5" width="3" height="3" fill="#1A3A6A"/></svg>
<svg class="a" style="left:30px;top:424px" width="16" height="16" viewBox="0 0 16 16"><rect x="3" y="3" width="10" height="10" fill="#E0E8F4"/><path d="M3 7L7 3M3 11L11 3M6 13L13 6M10 13L13 10" stroke="#5A7AA0"/><path d="M1 3H15M1 13H15M3 1V15M13 1V15" stroke="#1A3A6A" stroke-width="1.5"/></svg>
<svg class="a" style="left:30px;top:446px" width="16" height="16" viewBox="0 0 16 16"><path d="M2 2H10L14.5 7V14H2Z" fill="#D0DEEE" stroke="#111" stroke-width="1.3"/><circle cx="7" cy="8" r="2.5" fill="none" stroke="#333" stroke-width="1.2"/></svg>
<svg class="a" style="left:30px;top:468px" width="16" height="16" viewBox="0 0 16 16"><text x="8" y="15" font-size="17" font-family="Liberation Sans" fill="#111" text-anchor="middle">A</text></svg>
<svg class="a" style="left:30px;top:508px" width="16" height="16" viewBox="0 0 16 16"><path d="M1 5H14V14H1Z" fill="#E0ECF8" stroke="#3A5A8A"/><path d="M4 7H11M4 9H11M4 11H9" stroke="#5A7AA0"/><path d="M2 10L6 6" stroke="#8A6A30" stroke-width="1.5"/><rect x="5" y="1" width="6" height="5" fill="#fff" stroke="#3A5A8A"/></svg>
<svg class="a" style="left:30px;top:536px" width="16" height="16" viewBox="0 0 16 16"><path d="M2 5L6 1.5H15V11L11 14.5H2Z" fill="#E8F0FA" stroke="#1A3A6A"/><path d="M2 5L6 1.5H15L11 5Z" fill="#2A5AA0"/><path d="M2 5H11V14.5M11 5L15 1.5M6 1.5V11H15M6 11L2 14.5" stroke="#1A3A6A" fill="none" stroke-width="0.8"/></svg>
<svg class="a" style="left:30px;top:558px" width="16" height="16" viewBox="0 0 16 16"><path d="M2 5L6 1.5H15V11L11 14.5H2Z" fill="#E8F0FA" stroke="#1A3A6A"/><path d="M2 14.5L6 11H15L11 14.5Z" fill="#2A5AA0"/><path d="M2 5H11V14.5M11 5L15 1.5M6 1.5V11H15" stroke="#1A3A6A" fill="none" stroke-width="0.8"/></svg>
<svg class="a" style="left:30px;top:580px" width="16" height="16" viewBox="0 0 16 16"><path d="M2 5L6 1.5H15V11L11 14.5H2Z" fill="#E8F0FA" stroke="#1A3A6A"/><path d="M2 5L6 1.5V11L2 14.5Z" fill="#2A5AA0"/><path d="M2 5H11V14.5M11 5L15 1.5" stroke="#1A3A6A" fill="none" stroke-width="0.8"/></svg>
<svg class="a" style="left:30px;top:602px" width="16" height="16" viewBox="0 0 16 16"><path d="M2 5L6 1.5H15V11L11 14.5H2Z" fill="#E8F0FA" stroke="#1A3A6A"/><path d="M11 5L15 1.5V11L11 14.5Z" fill="#2A5AA0"/><path d="M2 5H11V14.5M6 1.5V11H15" stroke="#1A3A6A" fill="none" stroke-width="0.8"/></svg>
<svg class="a" style="left:30px;top:624px" width="16" height="16" viewBox="0 0 16 16"><path d="M2 5L6 1.5H15V11L11 14.5H2Z" fill="#E8F0FA" stroke="#1A3A6A"/><rect x="2" y="5" width="9" height="9.5" fill="#2A5AA0"/><path d="M11 5L15 1.5" stroke="#1A3A6A"/></svg>
<svg class="a" style="left:30px;top:646px" width="16" height="16" viewBox="0 0 16 16"><path d="M2 5L6 1.5H15V11L11 14.5H2Z" fill="#E8F0FA" stroke="#1A3A6A"/><rect x="6" y="1.5" width="9" height="9.5" fill="#2A5AA0"/><path d="M2 5H11V14.5M2 5L6 1.5" stroke="#1A3A6A" fill="none"/></svg>
<svg class="a" style="left:30px;top:674px" width="16" height="16" viewBox="0 0 16 16"><path d="M8 1L14.5 4.5V11.5L8 15L1.5 11.5V4.5Z" fill="#E0ECF8" stroke="#1A3A6A"/><path d="M1.5 4.5L8 8L14.5 4.5M8 8V15" stroke="#1A3A6A" fill="none" stroke-width="0.8"/><path d="M8 8V15L1.5 11.5V4.5Z" fill="#2A5AA0"/></svg>
<svg class="a" style="left:30px;top:696px" width="16" height="16" viewBox="0 0 16 16"><path d="M8 1L14.5 4.5V11.5L8 15L1.5 11.5V4.5Z" fill="#E0ECF8" stroke="#1A3A6A"/><path d="M1.5 4.5L8 8L14.5 4.5M8 8V15" stroke="#1A3A6A" fill="none" stroke-width="0.8"/><path d="M8 8V15L14.5 11.5V4.5Z" fill="#2A5AA0"/></svg>
<svg class="a" style="left:30px;top:718px" width="16" height="16" viewBox="0 0 16 16"><path d="M8 1L14.5 4.5V11.5L8 15L1.5 11.5V4.5Z" fill="#E0ECF8" stroke="#1A3A6A"/><path d="M1.5 4.5L8 8L14.5 4.5M8 8V15" stroke="#1A3A6A" fill="none" stroke-width="0.8"/><path d="M8 1L14.5 4.5V11.5L8 8Z" fill="#2A5AA0"/></svg>
<svg class="a" style="left:30px;top:740px" width="16" height="16" viewBox="0 0 16 16"><path d="M8 1L14.5 4.5V11.5L8 15L1.5 11.5V4.5Z" fill="#E0ECF8" stroke="#1A3A6A"/><path d="M1.5 4.5L8 8L14.5 4.5M8 8V15" stroke="#1A3A6A" fill="none" stroke-width="0.8"/><path d="M8 1L1.5 4.5V11.5L8 8Z" fill="#2A5AA0"/></svg>
<svg class="a" style="left:30px;top:770px" width="16" height="16" viewBox="0 0 16 16"><path d="M1 7H6V15H1Z" fill="#111"/><path d="M5 5H15V14H5Z" fill="#222"/><circle cx="8" cy="9" r="2.3" fill="#fff"/><circle cx="12" cy="9" r="2.3" fill="#fff"/><circle cx="8" cy="9" r="1.2" fill="#111"/><circle cx="12" cy="9" r="1.2" fill="#111"/><path d="M6 4Q10 1 14 4" stroke="#111" stroke-width="2" fill="none"/></svg>
<svg class="a" style="left:1233px;top:116px" width="16" height="16" viewBox="0 0 16 16"><path d="M1 6L5 4H15V12L11 15H1Z" fill="#3A7AC8" stroke="#1A4A8A"/><path d="M1 6H11V15M11 6L15 4" stroke="#1A4A8A" fill="none"/><path d="M1 6L5 4H15L11 6Z" fill="#8AB8EC"/><circle cx="7" cy="4.5" r="4" fill="#F0D040" stroke="#9A7A10" stroke-width="0.7"/></svg>
<svg class="a" style="left:1233px;top:144px" width="16" height="16" viewBox="0 0 16 16"><path d="M0.5 6L3 9" stroke="#1A6A20" stroke-width="2"/><path d="M13 8Q16.5 8 14 12" stroke="#1A6A20" stroke-width="1.6" fill="none"/><ellipse cx="8" cy="10" rx="6.3" ry="5" fill="url(#gtea)" stroke="#0E4A14" stroke-width="0.8"/><ellipse cx="8" cy="5.3" rx="3.5" ry="1.6" fill="#3AB04A" stroke="#0E4A14" stroke-width="0.6"/><circle cx="8" cy="3.6" r="1" fill="#2A8A30"/></svg>
<svg class="a" style="left:1233px;top:172px" width="16" height="16" viewBox="0 0 16 16"><path d="M2 6H15V15H2Z" fill="#111"/><path d="M4 8H13M4 10.5H13M4 13H13" stroke="#E8E8E8" stroke-width="0.8"/><path d="M2 3L14 0.5L15 4L3 6.5Z" fill="#222" stroke="#fff" stroke-width="0.5"/><path d="M5 2L7 5M9 1.5L11 4.5" stroke="#fff"/><path d="M1 6H3V15H1Z" fill="#6A9AE0"/></svg>
<svg class="a" style="left:1233px;top:194px" width="16" height="16" viewBox="0 0 16 16"><path d="M3 15H10" stroke="#1A3A7A" stroke-width="2"/><path d="M6 15L5 8L10 4" stroke="#1A4A8A" stroke-width="2" fill="none"/><path d="M7 2L15 4L12 9Z" fill="#4A8AD0"/><path d="M10 7L15 6L14 12Z" fill="#F0E070"/></svg>
<svg class="a" style="left:1233px;top:216px" width="16" height="16" viewBox="0 0 16 16"><circle cx="7" cy="9" r="6" fill="#2A9A3A" stroke="#1A5A20"/><path d="M15 1L5 11" stroke="#7A4A20" stroke-width="2.5"/><path d="M5 11L3 13" stroke="#111" stroke-width="2"/></svg>
<svg class="a" style="left:1233px;top:238px" width="16" height="16" viewBox="0 0 16 16"><rect x="1" y="1.5" width="12" height="12" fill="#fff" stroke="#1A3A7A"/><path d="M3 4H10M3 6H10M3 8H8" stroke="#3A5A8A"/><circle cx="9" cy="11" r="4" fill="#2A9A3A"/><path d="M15 2L8 10" stroke="#7A4A20" stroke-width="2"/></svg>
<svg class="a" style="left:1233px;top:260px" width="16" height="16" viewBox="0 0 16 16"><text x="0" y="5" font-size="6" font-weight="bold" font-family="Liberation Sans" fill="#111">(u,v)</text><ellipse cx="9" cy="11" rx="5" ry="4" fill="#2A9A3A" stroke="#1A5A20"/><path d="M2 5V15H15" stroke="#C02020" stroke-width="1.2" fill="none"/></svg>
<svg class="a" style="left:1233px;top:288px" width="16" height="16" viewBox="0 0 16 16"><rect x="1" y="2" width="14" height="12" fill="#6A9AD0"/><path d="M1 8L6 5L10 8L15 6V14H1Z" fill="#5A8A4A"/><path d="M1 11H15V14H1Z" fill="#3A6A20"/></svg>
<svg class="a" style="left:1233px;top:310px" width="16" height="16" viewBox="0 0 16 16"><rect x="1" y="2" width="14" height="12" fill="#3A6AA0"/><path d="M1 3L9 9L15 7V14H1Z" fill="#1A4A7A"/><path d="M8 10H15V14H8Z" fill="#B0D0F0"/></svg>
<svg class="a" style="left:1233px;top:332px" width="16" height="16" viewBox="0 0 16 16"><path d="M5 1L1 7H3L0 12H10L7 7H9Z" fill="#2A8A2A" stroke="#1A5A1A" stroke-width="0.6"/><rect x="4" y="12" width="2" height="3" fill="#6A4A20"/><path d="M12 4V12M8 8H16M9 5L15 11M15 5L9 11" stroke="#6AA0E0" stroke-width="1"/></svg>
<svg class="a" style="left:1233px;top:354px" width="16" height="16" viewBox="0 0 16 16"><path d="M5 1L1 7H3L0 12H10L7 7H9Z" fill="#2A8A2A" stroke="#1A5A1A" stroke-width="0.6"/><rect x="4" y="12" width="2" height="3" fill="#6A4A20"/><path d="M15 3L8 12" stroke="#C8A020" stroke-width="2.5"/></svg>
<svg class="a" style="left:1233px;top:376px" width="16" height="16" viewBox="0 0 16 16"><path d="M5 1L1 7H3L0 12H10L7 7H9Z" fill="#2A8A2A" stroke="#1A5A1A" stroke-width="0.6"/><rect x="4" y="12" width="2" height="3" fill="#6A4A20"/><rect x="8" y="2" width="7" height="12" fill="#fff" stroke="#1A3A6A"/><path d="M9 4H14M9 6H14M9 8H14M9 10H14" stroke="#1A3A6A"/></svg>
<svg class="a" style="left:1233px;top:404px" width="16" height="16" viewBox="0 0 16 16"><path d="M0.5 6L3 9" stroke="#1A6A20" stroke-width="2"/><path d="M13 8Q16.5 8 14 12" stroke="#1A6A20" stroke-width="1.6" fill="none"/><ellipse cx="8" cy="10" rx="6.3" ry="5" fill="url(#gtea)" stroke="#0E4A14" stroke-width="0.8"/><ellipse cx="8" cy="5.3" rx="3.5" ry="1.6" fill="#3AB04A" stroke="#0E4A14" stroke-width="0.6"/><circle cx="8" cy="3.6" r="1" fill="#2A8A30"/><rect x="7" y="8" width="8" height="7" fill="#E0ECF8" stroke="#1A3A6A"/><path d="M8 11H14M8 13H14" stroke="#3A5A8A"/></svg>
<svg class="a" style="left:1233px;top:426px" width="16" height="16" viewBox="0 0 16 16"><rect x="1" y="0" width="8" height="7" fill="#fff" stroke="#444"/><path d="M2 2H8M2 4H8M4 0V7M6 0V7" stroke="#444" stroke-width="0.5"/><path d="M0.5 6L3 9" stroke="#1A6A20" stroke-width="2"/><path d="M13 8Q16.5 8 14 12" stroke="#1A6A20" stroke-width="1.6" fill="none"/><ellipse cx="8" cy="10" rx="6.3" ry="5" fill="url(#gtea)" stroke="#0E4A14" stroke-width="0.8"/><ellipse cx="8" cy="5.3" rx="3.5" ry="1.6" fill="#3AB04A" stroke="#0E4A14" stroke-width="0.6"/><circle cx="8" cy="3.6" r="1" fill="#2A8A30"/></svg>
<svg class="a" style="left:1233px;top:466px" width="16" height="16" viewBox="0 0 16 16"><rect x="4" y="1.5" width="10" height="9" fill="#E8F0FA" stroke="#4A6A8A"/><rect x="1" y="5" width="7" height="5" fill="#E0E060" stroke="#2A4A7A"/><circle cx="8" cy="11" r="4" fill="#C0D880" stroke="#5A6A20"/><rect x="0" y="9" width="3" height="3" fill="#1A4A7A"/></svg>
<svg class="a" style="left:1233px;top:494px" width="16" height="16" viewBox="0 0 16 16"><path d="M1 5L5 1L15 10L11 14Z" fill="#fff" stroke="#5A6A8A"/><path d="M3 3L5 5" stroke="#111" stroke-width="2"/></svg>
<svg class="a" style="left:1233px;top:516px" width="16" height="16" viewBox="0 0 16 16"><rect x="1.5" y="1.5" width="13" height="13" fill="#fff" stroke="#2A4A8A"/><path d="M4 4H6V6ZM8 4H10V6ZM4 7H6V9ZM10 7H12V9ZM4 10H6V12ZM7 10H9V12ZM11 10H13V12Z" fill="#C02020"/><path d="M6 5H8V7H6ZM9 9H11V11H9ZM12 5H14V7H12Z" fill="#111"/></svg>
<svg class="a" style="left:1233px;top:544px" width="16" height="16" viewBox="0 0 16 16"><rect x="1.5" y="5.5" width="7" height="9" fill="#E8F0FA" stroke="#4A6A9A"/><rect x="3.5" y="7.5" width="4" height="4" fill="none" stroke="#4A6A9A"/><path d="M11 1H14V6H11Z" fill="#fff" stroke="#4A6A9A"/><path d="M12.5 6V11L9 13" stroke="#111" fill="none"/></svg>
<svg class="a" style="left:1233px;top:572px" width="16" height="16" viewBox="0 0 16 16"><rect x="1.5" y="7.5" width="7" height="8" fill="#E8F0FA" stroke="#4A6A9A"/><rect x="8" y="1" width="7" height="6" fill="#fff" stroke="#444"/><path d="M8 3H15M8 5H15M11 1V7" stroke="#444" stroke-width="0.6"/><path d="M11 8V12L9 14" stroke="#111" fill="none"/></svg>
<svg class="a" style="left:1259px;top:116px" width="16" height="16" viewBox="0 0 16 16"><rect x="1" y="6" width="6" height="4" fill="#1A4A8A"/><path d="M7 8H11" stroke="#111" stroke-width="1.4"/><circle cx="13" cy="8" r="2.5" fill="#DCE8F8" stroke="#1A4A8A" stroke-width="1.3"/></svg>
<svg class="a" style="left:1259px;top:138px" width="16" height="16" viewBox="0 0 16 16"><rect x="1" y="11" width="4" height="4" fill="#1A4A8A"/><path d="M3 11V4H10" stroke="#111" stroke-width="1.4" stroke-dasharray="2 1" fill="none"/><circle cx="13" cy="4" r="2.5" fill="#DCE8F8" stroke="#1A4A8A" stroke-width="1.3"/></svg>
<svg class="a" style="left:1259px;top:166px" width="16" height="16" viewBox="0 0 16 16"><path d="M3 13L13 3" stroke="#111" stroke-width="1.6"/><circle cx="3" cy="13" r="2.3" fill="#DCE8F8" stroke="#1A4A8A" stroke-width="1.3"/><circle cx="13" cy="3" r="2.3" fill="#DCE8F8" stroke="#1A4A8A" stroke-width="1.3"/></svg>
<svg class="a" style="left:1259px;top:188px" width="16" height="16" viewBox="0 0 16 16"><path d="M1 15L15 1" stroke="#111" stroke-width="1.6"/><circle cx="8" cy="8" r="2.3" fill="#DCE8F8" stroke="#1A4A8A" stroke-width="1.3"/></svg>
<svg class="a" style="left:1259px;top:211px" width="16" height="16" viewBox="0 0 16 16"><path d="M2 2L14 14M14 2L2 14" stroke="#111" stroke-width="1.8"/><rect x="6" y="6" width="4" height="4" fill="#DCE8F8" stroke="#1A4A8A" stroke-width="1.3"/></svg>
<svg class="a" style="left:1259px;top:233px" width="16" height="16" viewBox="0 0 16 16"><path d="M2 14L14 2" stroke="#111" stroke-width="1.8"/><path d="M2 2L14 14" stroke="#111" stroke-width="1.8" stroke-dasharray="2 2"/><rect x="6" y="6" width="4" height="4" fill="#DCE8F8" stroke="#1A4A8A" stroke-width="1.3"/></svg>
<svg class="a" style="left:1259px;top:252px" width="16" height="16" viewBox="0 0 16 16"><path d="M1 8H7" stroke="#111" stroke-width="1.6"/><path d="M8 8H15" stroke="#111" stroke-width="1.6" stroke-dasharray="2 1.5"/></svg>
<svg class="a" style="left:1259px;top:282px" width="16" height="16" viewBox="0 0 16 16"><circle cx="8" cy="8" r="6.5" fill="#E8EEF6" stroke="#111" stroke-width="1.5"/><circle cx="8" cy="8" r="2.3" fill="#DCE8F8" stroke="#1A4A8A" stroke-width="1.3"/></svg>
<svg class="a" style="left:1259px;top:304px" width="16" height="16" viewBox="0 0 16 16"><circle cx="8" cy="8" r="5.5" fill="#E8EEF6" stroke="#111" stroke-width="1.3"/><circle cx="8" cy="2.5" r="2" fill="#DCE8F8" stroke="#1A4A8A" stroke-width="1.3"/><circle cx="8" cy="13.5" r="2" fill="#DCE8F8" stroke="#1A4A8A" stroke-width="1.3"/><circle cx="2.5" cy="8" r="2" fill="#DCE8F8" stroke="#1A4A8A" stroke-width="1.3"/><circle cx="13.5" cy="8" r="2" fill="#DCE8F8" stroke="#1A4A8A" stroke-width="1.3"/></svg>
<svg class="a" style="left:1259px;top:326px" width="16" height="16" viewBox="0 0 16 16"><circle cx="8" cy="9" r="6" fill="#E8EEF6" stroke="#111" stroke-width="1.4"/><circle cx="4" cy="4" r="2.3" fill="#DCE8F8" stroke="#1A4A8A" stroke-width="1.3"/><path d="M1 2L10 1" stroke="#111" stroke-width="1.3"/></svg>
<svg class="a" style="left:1259px;top:353px" width="16" height="16" viewBox="0 0 16 16"><path d="M1 13H15M8 2V13" stroke="#111" stroke-width="1.5"/><circle cx="8" cy="13" r="2.3" fill="#DCE8F8" stroke="#1A4A8A" stroke-width="1.3"/></svg>
<svg class="a" style="left:1259px;top:375px" width="16" height="16" viewBox="0 0 16 16"><path d="M1 13L13 1M4 15L15 4" stroke="#111" stroke-width="1.8"/></svg>
<svg class="a" style="left:1259px;top:397px" width="16" height="16" viewBox="0 0 16 16"><path d="M3 2H12L14 7H2Z" fill="#E0E060" stroke="#111"/><circle cx="5" cy="10" r="3" fill="#DCE8F8" stroke="#1A4A8A" stroke-width="1.3"/><circle cx="11" cy="11" r="3.5" fill="#C0D880" stroke="#111"/></svg>
<svg class="a" style="left:1259px;top:419px" width="16" height="16" viewBox="0 0 16 16"><circle cx="8" cy="8" r="2.5" fill="#DCE8F8" stroke="#1A4A8A" stroke-width="1.3"/></svg>
<svg class="a" style="left:1259px;top:446px" width="16" height="16" viewBox="0 0 16 16"><path d="M2 14L14 2" stroke="#111" stroke-width="1.6"/><circle cx="8" cy="8" r="2.3" fill="#DCE8F8" stroke="#1A4A8A" stroke-width="1.3"/><circle cx="11" cy="11" r="2.3" fill="#DCE8F8" stroke="#1A4A8A" stroke-width="1.3"/></svg>
<svg class="a" style="left:1259px;top:468px" width="16" height="16" viewBox="0 0 16 16"><path d="M3 14V6Q3 2 7 2Q11 2 11 6" stroke="#9A9A9A" stroke-width="3" fill="none"/><path d="M2 15L14 3" stroke="#C02020" stroke-width="1.5"/><rect x="12" y="12" width="4" height="4" fill="#fff" stroke="#111"/></svg>
<svg class="a" style="left:1259px;top:498px" width="16" height="16" viewBox="0 0 16 16"><path d="M3 14V6Q3 2 7.5 2Q12 2 12 6V12" stroke="#A02020" stroke-width="3.5" fill="none"/><rect x="12" y="11" width="4" height="4" fill="#fff" stroke="#1A4A8A"/></svg>
<svg class="a" style="left:1259px;top:538px" width="16" height="16" viewBox="0 0 16 16"><path d="M2 7Q1 11 5 15H10L12 11V9L7 6Z" fill="#D89090" stroke="#A05050"/><path d="M12 1V8M8.5 4.5H15.5" stroke="#203868" stroke-width="1.5"/><path d="M8 12H14V15H8Z" fill="#2A5890"/></svg>
<svg class="a" style="left:1259px;top:560px" width="16" height="16" viewBox="0 0 16 16"><circle cx="6.5" cy="7" r="5" fill="#E8EEF6" stroke="#404A58" stroke-width="1.5"/><path d="M10 10.5L14 15" stroke="#7A5A30" stroke-width="2.2"/><path d="M13 1V6M10.5 3.5H15.5M10.5 8H15.5" stroke="#222" stroke-width="1.1"/></svg>
<svg class="a" style="left:1259px;top:582px" width="16" height="16" viewBox="0 0 16 16"><circle cx="8" cy="9" r="6" fill="#2A9A3A"/><ellipse cx="8" cy="9" rx="7.5" ry="3" fill="none" stroke="#E8F0F8" stroke-width="1.3" transform="rotate(-25 8 9)"/><circle cx="12" cy="4" r="3" fill="#E8D030"/></svg>
<svg class="a" style="left:1259px;top:604px" width="16" height="16" viewBox="0 0 16 16"><circle cx="9" cy="8" r="6" fill="#2A9A3A"/><circle cx="12" cy="4" r="3" fill="#E8D030"/><path d="M1 15L7 9M3 9H7V13" stroke="#1A4A8A" stroke-width="2" fill="none"/></svg>
<svg class="a" style="left:1259px;top:626px" width="16" height="16" viewBox="0 0 16 16"><path d="M1 7H6V14H1Z" fill="#111"/><path d="M5 5H12V13H5Z" fill="#222"/><circle cx="7" cy="9" r="1.8" fill="#fff"/><circle cx="10" cy="9" r="1.8" fill="#fff"/><path d="M12 2Q16 8 12 14" stroke="#444" stroke-width="1.3" fill="none"/></svg>
<svg class="a" style="left:1259px;top:648px" width="16" height="16" viewBox="0 0 16 16"><path d="M1 5H5V11H1Z" fill="#111"/><path d="M4 3H11V10H4Z" fill="#222"/><circle cx="6" cy="6.5" r="1.6" fill="#fff"/><circle cx="9" cy="6.5" r="1.6" fill="#fff"/><rect x="1" y="12" width="10" height="3" fill="#C8A020"/><path d="M11 13.5H15M13 11.5L15 13.5L13 15.5" stroke="#1A3A6A" stroke-width="1.8" fill="none"/></svg>
<svg class="a" style="left:1259px;top:670px" width="16" height="16" viewBox="0 0 16 16"><path d="M5 1H15V10L11 13H3Z" fill="#2A5AD0"/><path d="M3 7H11L13 10H3Z" fill="#A0C0E8" stroke="#1A3A6A"/><path d="M1 4L4 1M12 15L15 12" stroke="#111" stroke-width="1.5"/></svg>
<svg class="a" style="left:1259px;top:692px" width="16" height="16" viewBox="0 0 16 16"><rect x="1" y="2" width="14" height="13" fill="#C8A010" stroke="#6A5010"/><path d="M4 8L10 4L14 6L8 11Z" fill="#D0D0D0" stroke="#333"/></svg>
<svg class="a" style="left:1259px;top:714px" width="16" height="16" viewBox="0 0 16 16"><rect x="1" y="1" width="14" height="14" fill="#3A6AD8" stroke="#1A3A8A"/><path d="M2 9L9 5L13 7V12L6 15H2Z" fill="#C0D4EC" stroke="#1A3A6A"/></svg>
<div class="a " style="left:1240px;top:975px;width:24px;height:18px;border-top:1px solid #ACA899;border-left:1px solid #ACA899;border-right:1px solid #fff;border-bottom:1px solid #fff;background:#F4F3EE"></div>
<svg class="a" style="left:1244px;top:976px" width="16" height="16" viewBox="0 0 16 16"><path d="M2 3L7 1L10 5L6 12L2 14Z" fill="#B0C0D8" stroke="#4A5A8A"/><path d="M8 7L14 16H2Z" fill="#F0D020" stroke="#7A6010"/><rect x="7.3" y="10" width="1.4" height="3" fill="#111"/><rect x="7.3" y="14" width="1.4" height="1.2" fill="#111"/></svg>
<svg class="a" style="left:1269px;top:985px" width="10" height="6"><path d="M0 0H8L4 4.5Z" fill="#000"/></svg>
<div class="a " style="left:36px;top:78px;width:300px;height:22px;background:#fff;border:1px solid #8A8A86"></div>
<div class="a " style="left:320px;top:80px;width:15px;height:18px;background:linear-gradient(135deg,#DCE6FC,#B8CCF6);border-radius:1px"><svg class="a" style="left:0;top:0" width="15" height="17"><path d="M4 7L7.5 10.5L11 7" stroke="#4D6185" stroke-width="2.2" fill="none"/></svg></div>
<div class="a " style="left:928px;top:50px;width:101px;height:22px;background:#fff;border:1px solid #8A8A86"></div>
<div class="a " style="left:1013px;top:52px;width:15px;height:18px;background:linear-gradient(135deg,#DCE6FC,#B8CCF6);border-radius:1px"><svg class="a" style="left:0;top:0" width="15" height="17"><path d="M4 7L7.5 10.5L11 7" stroke="#4D6185" stroke-width="2.2" fill="none"/></svg></div>
<div id="t28" class="a t" style="left:934px;top:54px;font-size:12px;line-height:14px;font-family:'Liberation Sans',sans-serif;color:#000;transform:scaleX(0.9856);transform-origin:0 0;">Standard</div>
<div class="a " style="left:758px;top:78px;width:150px;height:22px;background:#fff;border:1px solid #8A8A86"></div>
<div class="a " style="left:892px;top:80px;width:15px;height:18px;background:linear-gradient(135deg,#DCE6FC,#B8CCF6);border-radius:1px"><svg class="a" style="left:0;top:0" width="15" height="17"><path d="M4 7L7.5 10.5L11 7" stroke="#4D6185" stroke-width="2.2" fill="none"/></svg></div>
<div class="a " style="left:764px;top:84px;width:10px;height:10px;background:#000"></div>
<div id="t29" class="a t" style="left:779px;top:83px;font-size:12px;line-height:14px;font-family:'Liberation Sans',sans-serif;color:#000;transform:scaleX(0.8403);transform-origin:0 0;">ByLayer</div>
<div class="a " style="left:914px;top:78px;width:160px;height:22px;background:#fff;border:1px solid #8A8A86"></div>
<div class="a " style="left:1058px;top:80px;width:15px;height:18px;background:linear-gradient(135deg,#DCE6FC,#B8CCF6);border-radius:1px"><svg class="a" style="left:0;top:0" width="15" height="17"><path d="M4 7L7.5 10.5L11 7" stroke="#4D6185" stroke-width="2.2" fill="none"/></svg></div>
<div class="a " style="left:919px;top:88px;width:59px;height:1px;background:#000"></div>
<div id="t30" class="a t" style="left:984px;top:83px;font-size:12px;line-height:14px;font-family:'Liberation Sans',sans-serif;color:#000;transform:scaleX(0.8630);transform-origin:0 0;">ByLayer</div>
<div class="a " style="left:1080px;top:78px;width:125px;height:22px;background:#fff;border:1px solid #8A8A86"></div>
<div class="a " style="left:1189px;top:80px;width:15px;height:18px;background:linear-gradient(135deg,#DCE6FC,#B8CCF6);border-radius:1px"><svg class="a" style="left:0;top:0" width="15" height="17"><path d="M4 7L7.5 10.5L11 7" stroke="#4D6185" stroke-width="2.2" fill="none"/></svg></div>
<div class="a " style="left:1085px;top:88px;width:34px;height:1px;background:#000"></div>
<div id="t31" class="a t" style="left:1125px;top:83px;font-size:12px;line-height:14px;font-family:'Liberation Sans',sans-serif;color:#000;transform:scaleX(0.8630);transform-origin:0 0;">ByLayer</div>
<div class="a " style="left:1211px;top:78px;width:79px;height:22px;background:#F0EEE4;border:1px solid #C8C5B8"></div>
<div id="t32" class="a t" style="left:1222px;top:83px;font-size:12px;line-height:14px;font-family:'Liberation Sans',sans-serif;color:#ACA899;transform:scaleX(0.8199);transform-origin:0 0;">ByColor</div>
<svg class="a" style="left:40px;top:80px" width="95" height="18">
<path d="M7 2Q2 2 2.5 7Q3 9 5 11V13H9V11Q11 9 11.5 7Q12 2 7 2Z" fill="#FFFFE0" stroke="#9A9A60"/>
<rect x="5" y="13" width="4" height="3" fill="#3A4A7A"/>
<circle cx="23.5" cy="8.5" r="6" fill="#F0E040" stroke="#3A4A30" stroke-width="1.5"/>
<path d="M17 2L19 4M30 2L28 4M17 15L19 13M30 15L28 13" stroke="#A0D040" stroke-width="1.3"/>
<circle cx="39" cy="7" r="6" fill="#A8B8D0" stroke="#8090B0"/>
<path d="M39 2V12M34 7H44M35.5 3.5L42.5 10.5M42.5 3.5L35.5 10.5" stroke="#C8D4E4" stroke-width="0.8"/>
<rect x="39.5" y="9.5" width="7" height="6" fill="#fff" stroke="#8090B0"/>
<path d="M53 7V5Q53 2 56 2Q59 2 59 5" fill="none" stroke="#C8C830" stroke-width="2"/>
<rect x="55" y="7" width="9" height="8" rx="1" fill="#E0E040" stroke="#9A9A20"/>
<rect x="67" y="4" width="10" height="10" fill="#000"/>
</svg>
<div id="t33" class="a t" style="left:123px;top:83px;font-size:12px;line-height:14px;font-family:'Liberation Sans',sans-serif;color:#000;transform:scaleX(0.8972);transform-origin:0 0;">0</div>
<div class="a " style="left:1232px;top:137px;width:18px;height:2px;border-top:1px solid #C5C0AA;border-bottom:1px solid #fff"></div>
<div class="a " style="left:1232px;top:165px;width:18px;height:2px;border-top:1px solid #C5C0AA;border-bottom:1px solid #fff"></div>
<div class="a " style="left:1232px;top:281px;width:18px;height:2px;border-top:1px solid #C5C0AA;border-bottom:1px solid #fff"></div>
<div class="a " style="left:1232px;top:397px;width:18px;height:2px;border-top:1px solid #C5C0AA;border-bottom:1px solid #fff"></div>
<div class="a " style="left:1232px;top:488px;width:18px;height:2px;border-top:1px solid #C5C0AA;border-bottom:1px solid #fff"></div>
<div class="a " style="left:1232px;top:537px;width:18px;height:2px;border-top:1px solid #C5C0AA;border-bottom:1px solid #fff"></div>
<div class="a " style="left:1232px;top:565px;width:18px;height:2px;border-top:1px solid #C5C0AA;border-bottom:1px solid #fff"></div>
<div class="a " style="left:1258px;top:159px;width:18px;height:2px;border-top:1px solid #C5C0AA;border-bottom:1px solid #fff"></div>
<div class="a " style="left:1258px;top:275px;width:18px;height:2px;border-top:1px solid #C5C0AA;border-bottom:1px solid #fff"></div>
<div class="a " style="left:1258px;top:347px;width:18px;height:2px;border-top:1px solid #C5C0AA;border-bottom:1px solid #fff"></div>
<div class="a " style="left:1258px;top:443px;width:18px;height:2px;border-top:1px solid #C5C0AA;border-bottom:1px solid #fff"></div>
<div class="a " style="left:1258px;top:492px;width:18px;height:2px;border-top:1px solid #C5C0AA;border-bottom:1px solid #fff"></div>
<div class="a " style="left:1258px;top:735px;width:18px;height:2px;border-top:1px solid #C5C0AA;border-bottom:1px solid #fff"></div>
<div class="a " style="left:29px;top:529px;width:18px;height:2px;border-top:1px solid #C5C0AA;border-bottom:1px solid #fff"></div>
<div class="a " style="left:29px;top:667px;width:18px;height:2px;border-top:1px solid #C5C0AA;border-bottom:1px solid #fff"></div>
<div class="a " style="left:29px;top:762px;width:18px;height:2px;border-top:1px solid #C5C0AA;border-bottom:1px solid #fff"></div>
</body></html>
